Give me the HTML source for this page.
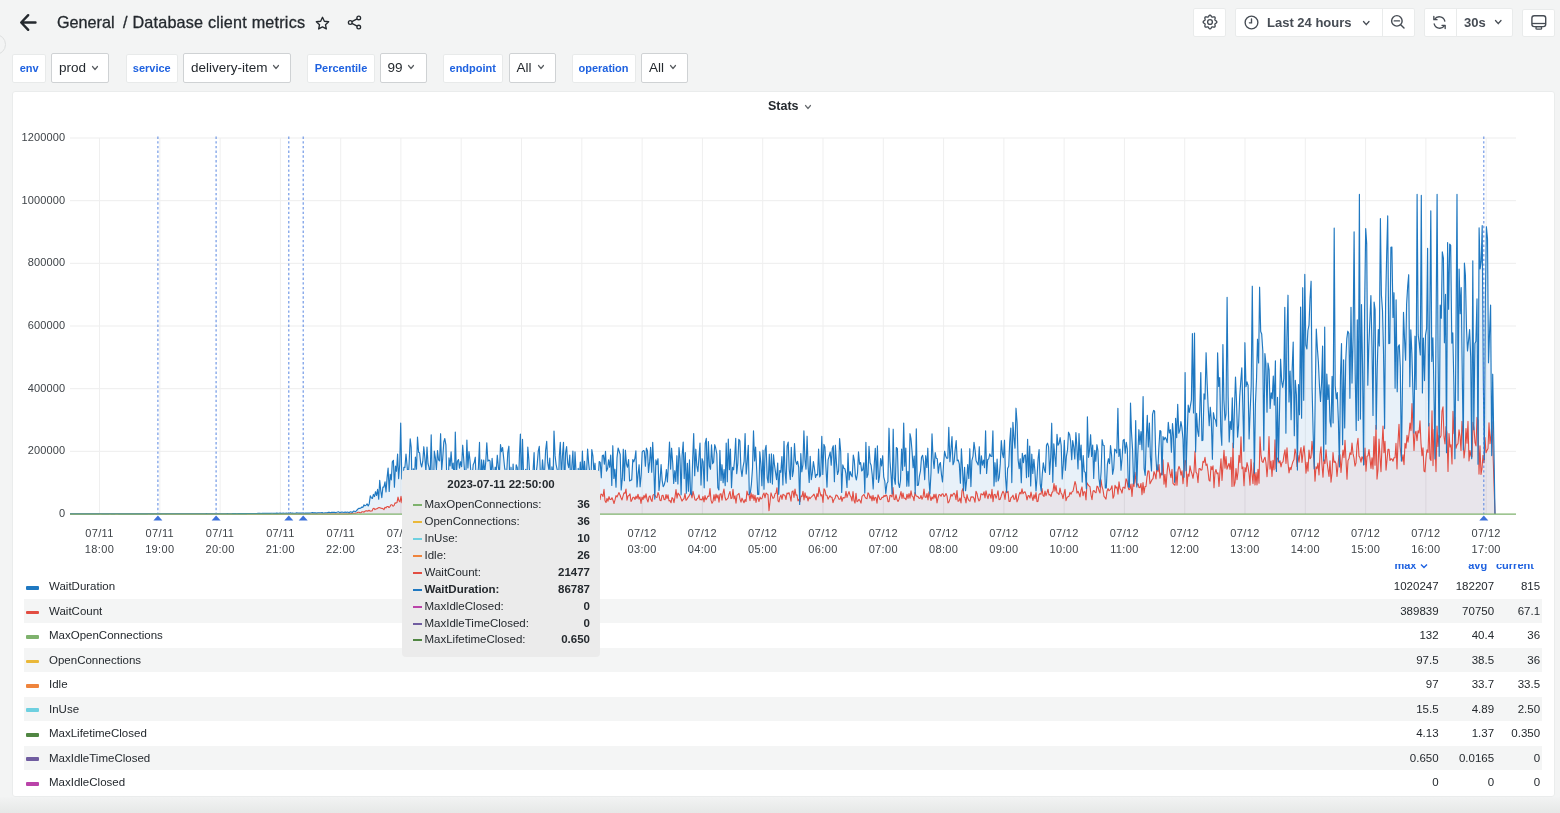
<!DOCTYPE html>
<html><head><meta charset="utf-8">
<style>
*{box-sizing:border-box;margin:0;padding:0}
html,body{width:1560px;height:813px;overflow:hidden}
body{background:#f3f4f4;font-family:"Liberation Sans",sans-serif;color:#24292e;position:relative}
.abs{position:absolute}
.btn{position:absolute;background:#fff;border:1px solid #e9ebeb;border-radius:2px}
.lbl{position:absolute;background:#fff;border:1px solid #e8eaea;border-radius:2px;color:#1f62e0;font-size:11px;font-weight:bold;height:29px;line-height:27px;text-align:center}
.val{position:absolute;background:#fff;border:1px solid #cfd2d4;border-radius:2px;color:#24292e;font-size:13.5px;height:29.5px;line-height:28px;padding-left:7px}
.chev{position:absolute;width:5px;height:5px;border-right:1.2px solid #555;border-bottom:1.2px solid #555;transform:rotate(45deg)}
.panel{position:absolute;left:12px;top:91px;width:1543px;height:706px;background:#fff;border:1px solid #eaecec;border-radius:3px}
.ylab{position:absolute;right:0;font-size:11px;color:#464c54;text-align:right;width:60px}
.xlab{position:absolute;font-size:11px;letter-spacing:0.35px;color:#3e4348;text-align:center;width:50px;line-height:16px}
.lrow{position:absolute;left:24px;width:1518px;height:24.65px;font-size:11.5px;color:#24292e}
.lrow.s{background:#f4f5f5}
.lrow .sw{position:absolute;left:2.2px;top:11.8px;width:13px;height:3.8px;border-radius:1px}
.lrow .nm{position:absolute;left:25px;top:6px}
.lrow .c1,.lrow .c2,.lrow .c3{position:absolute;top:6px;text-align:right;width:80px}
.lrow .c1{left:1334.6px}.lrow .c2{left:1390.1px}.lrow .c3{left:1436.1px}
.tt{position:absolute;left:402px;top:470px;width:198px;height:187px;background:#ebebeb;border-radius:4px}
.tr{position:absolute;left:0;width:198px;height:17px;font-size:11.5px;color:#24292e}
.tr .d{position:absolute;left:10.5px;top:6.3px;width:9px;height:2px}
.tr .n{position:absolute;left:22.5px;top:0.3px}
.tr .v{position:absolute;right:10px;top:0.3px;font-weight:bold}
#wrap{position:absolute;left:0;top:0;width:1560px;height:813px;will-change:transform}
</style></head><body><div id="wrap">
<!-- header -->
<svg class="abs" style="left:18px;top:12px" width="20" height="20" viewBox="0 0 20 20"><path d="M17.5 10.5H3.5M10.2 3.2L3.2 10.5L10.2 17.8" fill="none" stroke="#24292e" stroke-width="2.4" stroke-linecap="round" stroke-linejoin="round"/></svg>
<div class="abs" style="left:57px;top:13px;font-size:16.2px;color:#24292e;white-space:nowrap;-webkit-text-stroke:0.3px #24292e">General</div><div class="abs" style="left:123px;top:13px;font-size:16.2px;letter-spacing:0.2px;color:#24292e;white-space:nowrap;-webkit-text-stroke:0.3px #24292e">/ Database client metrics</div>
<svg class="abs" style="left:314px;top:14.7px" width="17" height="17" viewBox="0 0 24 24"><path d="M12 3.2l2.6 5.6 6.1.7-4.5 4.2 1.2 6-5.4-3-5.4 3 1.2-6-4.5-4.2 6.1-.7z" fill="none" stroke="#24292e" stroke-width="1.9" stroke-linejoin="round"/></svg>
<svg class="abs" style="left:345.7px;top:14.3px" width="17" height="17" viewBox="0 0 24 24"><circle cx="18" cy="5.5" r="2.6" fill="none" stroke="#24292e" stroke-width="1.9"/><circle cx="6" cy="12" r="2.6" fill="none" stroke="#24292e" stroke-width="1.9"/><circle cx="18" cy="18.5" r="2.6" fill="none" stroke="#24292e" stroke-width="1.9"/><path d="M8.3 10.8l7.4-4M8.3 13.2l7.4 4" stroke="#24292e" stroke-width="1.9"/></svg>
<div class="abs" style="left:-14.6px;top:33.8px;width:21px;height:21px;border:1px solid #dcdede;border-radius:50%"></div>
<!-- toolbar -->
<div class="btn" style="left:1193px;top:8px;width:33px;height:29px"></div>
<svg class="abs" style="left:1199.85px;top:12.3px" width="20" height="20" viewBox="0 0 20 20"><path d="M16.85 10.00L16.81 10.27L16.69 10.53L16.50 10.77L16.25 10.99L15.98 11.19L15.71 11.37L15.45 11.54L15.22 11.70L15.05 11.86L14.94 12.05L14.89 12.26L14.89 12.49L14.94 12.77L15.00 13.07L15.07 13.39L15.12 13.72L15.14 14.05L15.10 14.36L15.00 14.62L14.84 14.84L14.62 15.00L14.36 15.10L14.05 15.14L13.72 15.12L13.39 15.07L13.07 15.00L12.77 14.94L12.49 14.89L12.26 14.89L12.05 14.94L11.86 15.05L11.70 15.22L11.54 15.45L11.37 15.71L11.19 15.98L10.99 16.25L10.77 16.50L10.53 16.69L10.27 16.81L10.00 16.85L9.73 16.81L9.47 16.69L9.23 16.50L9.01 16.25L8.81 15.98L8.63 15.71L8.46 15.45L8.30 15.22L8.14 15.05L7.95 14.94L7.74 14.89L7.51 14.89L7.23 14.94L6.93 15.00L6.61 15.07L6.28 15.12L5.95 15.14L5.64 15.10L5.38 15.00L5.16 14.84L5.00 14.62L4.90 14.36L4.86 14.05L4.88 13.72L4.93 13.39L5.00 13.07L5.06 12.77L5.11 12.49L5.11 12.26L5.06 12.05L4.95 11.86L4.78 11.70L4.55 11.54L4.29 11.37L4.02 11.19L3.75 10.99L3.50 10.77L3.31 10.53L3.19 10.27L3.15 10.00L3.19 9.73L3.31 9.47L3.50 9.23L3.75 9.01L4.02 8.81L4.29 8.63L4.55 8.46L4.78 8.30L4.95 8.14L5.06 7.95L5.11 7.74L5.11 7.51L5.06 7.23L5.00 6.93L4.93 6.61L4.88 6.28L4.86 5.95L4.90 5.64L5.00 5.38L5.16 5.16L5.38 5.00L5.64 4.90L5.95 4.86L6.28 4.88L6.61 4.93L6.93 5.00L7.23 5.06L7.51 5.11L7.74 5.11L7.95 5.06L8.14 4.95L8.30 4.78L8.46 4.55L8.63 4.29L8.81 4.02L9.01 3.75L9.23 3.50L9.47 3.31L9.73 3.19L10.00 3.15L10.27 3.19L10.53 3.31L10.77 3.50L10.99 3.75L11.19 4.02L11.37 4.29L11.54 4.55L11.70 4.78L11.86 4.95L12.05 5.06L12.26 5.11L12.49 5.11L12.77 5.06L13.07 5.00L13.39 4.93L13.72 4.88L14.05 4.86L14.36 4.90L14.62 5.00L14.84 5.16L15.00 5.38L15.10 5.64L15.14 5.95L15.12 6.28L15.07 6.61L15.00 6.93L14.94 7.23L14.89 7.51L14.89 7.74L14.94 7.95L15.05 8.14L15.22 8.30L15.45 8.46L15.71 8.63L15.98 8.81L16.25 9.01L16.50 9.23L16.69 9.47L16.81 9.73L16.85 10.00Z" fill="none" stroke="#464c54" stroke-width="1.35" stroke-linejoin="round"/><circle cx="10" cy="10" r="2.4" fill="none" stroke="#464c54" stroke-width="1.35"/></svg>
<div class="btn" style="left:1235px;top:8px;width:180px;height:29px"></div>
<div class="abs" style="left:1382px;top:9px;width:1px;height:27px;background:#e9ebeb"></div>
<svg class="abs" style="left:1242.8px;top:14.2px" width="17" height="17" viewBox="0 0 24 24"><circle cx="12" cy="12" r="9" fill="none" stroke="#464c54" stroke-width="1.9"/><path d="M12 7v5.5H9" fill="none" stroke="#464c54" stroke-width="1.9" stroke-linecap="round"/></svg>
<div class="abs" style="left:1267px;top:15px;font-size:13px;font-weight:bold;color:#464c54;white-space:nowrap">Last 24 hours</div>

<svg class="abs" style="left:1389px;top:13px" width="18" height="18" viewBox="0 0 24 24"><circle cx="10.5" cy="10.5" r="7" fill="none" stroke="#464c54" stroke-width="1.9"/><path d="M7 10.5h7M15.6 15.6L20 20" fill="none" stroke="#464c54" stroke-width="1.9" stroke-linecap="round"/></svg>
<div class="btn" style="left:1424px;top:8px;width:89px;height:29px"></div>
<div class="abs" style="left:1456px;top:9px;width:1px;height:27px;background:#e9ebeb"></div>
<svg class="abs" style="left:1431px;top:14px" width="17" height="17" viewBox="0 0 24 24"><path d="M19.5 10A8 8 0 0 0 5 7.5M4.5 14A8 8 0 0 0 19 16.5" fill="none" stroke="#464c54" stroke-width="1.9" stroke-linecap="round"/><path d="M4 3.5v4.5h4.5M20 20.5V16h-4.5" fill="none" stroke="#464c54" stroke-width="1.9" stroke-linecap="round" stroke-linejoin="round"/></svg>
<div class="abs" style="left:1464px;top:15px;font-size:13px;font-weight:bold;color:#464c54">30s</div>

<div class="btn" style="left:1522px;top:8.5px;width:32.5px;height:28.5px"></div>
<svg class="abs" style="left:1525px;top:8px" width="30" height="30" viewBox="0 0 30 30"><rect x="6.9" y="7.8" width="13.8" height="10.8" rx="2.3" fill="none" stroke="#464c54" stroke-width="1.4"/><path d="M7 15.5H20.6" stroke="#464c54" stroke-width="1.3"/><rect x="10.9" y="18.6" width="5.8" height="2.6" rx="1.3" fill="none" stroke="#464c54" stroke-width="1.3"/></svg>
<!-- variables -->
<div class="lbl" style="left:12.4px;top:53.5px;width:33.6px">env</div>
<div class="val" style="left:51px;top:53px;width:58.4px">prod</div>
<div class="lbl" style="left:125.5px;top:53.5px;width:52.5px">service</div>
<div class="val" style="left:183px;top:53px;width:108px">delivery-item</div>
<div class="lbl" style="left:307px;top:53.5px;width:68px">Percentile</div>
<div class="val" style="left:379.5px;top:53px;width:47px">99</div>
<div class="lbl" style="left:442.5px;top:53.5px;width:60.5px">endpoint</div>
<div class="val" style="left:508.5px;top:53px;width:47px">All</div>
<div class="lbl" style="left:571.5px;top:53.5px;width:64px">operation</div>
<div class="val" style="left:641px;top:53px;width:46.5px">All</div>
<div class="abs" style="left:0;top:797px;width:1560px;height:16px;background:linear-gradient(#f2f3f3,#e6e8e7)"></div>
<!-- panel -->
<div class="panel"></div>
<div class="abs" style="left:768px;top:99px;font-size:12.5px;font-weight:bold;color:#24292e">Stats</div>

<div class="abs" style="left:0;width:65.3px;text-align:right;top:131.0px;font-size:11px;letter-spacing:0.15px;color:#3e4348">1200000</div>
<div class="abs" style="left:0;width:65.3px;text-align:right;top:193.7px;font-size:11px;letter-spacing:0.15px;color:#3e4348">1000000</div>
<div class="abs" style="left:0;width:65.3px;text-align:right;top:256.3px;font-size:11px;letter-spacing:0.15px;color:#3e4348">800000</div>
<div class="abs" style="left:0;width:65.3px;text-align:right;top:319.0px;font-size:11px;letter-spacing:0.15px;color:#3e4348">600000</div>
<div class="abs" style="left:0;width:65.3px;text-align:right;top:381.7px;font-size:11px;letter-spacing:0.15px;color:#3e4348">400000</div>
<div class="abs" style="left:0;width:65.3px;text-align:right;top:444.3px;font-size:11px;letter-spacing:0.15px;color:#3e4348">200000</div>
<div class="abs" style="left:0;width:65.3px;text-align:right;top:507.0px;font-size:11px;letter-spacing:0.15px;color:#3e4348">0</div>

<div class="xlab" style="left:74.5px;top:525px">07/11<br>18:00</div>
<div class="xlab" style="left:134.8px;top:525px">07/11<br>19:00</div>
<div class="xlab" style="left:195.1px;top:525px">07/11<br>20:00</div>
<div class="xlab" style="left:255.4px;top:525px">07/11<br>21:00</div>
<div class="xlab" style="left:315.7px;top:525px">07/11<br>22:00</div>
<div class="xlab" style="left:375.9px;top:525px">07/11<br>23:00</div>
<div class="xlab" style="left:436.2px;top:525px">07/12<br>00:00</div>
<div class="xlab" style="left:496.5px;top:525px">07/12<br>01:00</div>
<div class="xlab" style="left:556.8px;top:525px">07/12<br>02:00</div>
<div class="xlab" style="left:617.1px;top:525px">07/12<br>03:00</div>
<div class="xlab" style="left:677.4px;top:525px">07/12<br>04:00</div>
<div class="xlab" style="left:737.7px;top:525px">07/12<br>05:00</div>
<div class="xlab" style="left:798.0px;top:525px">07/12<br>06:00</div>
<div class="xlab" style="left:858.3px;top:525px">07/12<br>07:00</div>
<div class="xlab" style="left:918.6px;top:525px">07/12<br>08:00</div>
<div class="xlab" style="left:978.9px;top:525px">07/12<br>09:00</div>
<div class="xlab" style="left:1039.1px;top:525px">07/12<br>10:00</div>
<div class="xlab" style="left:1099.4px;top:525px">07/12<br>11:00</div>
<div class="xlab" style="left:1159.7px;top:525px">07/12<br>12:00</div>
<div class="xlab" style="left:1220.0px;top:525px">07/12<br>13:00</div>
<div class="xlab" style="left:1280.3px;top:525px">07/12<br>14:00</div>
<div class="xlab" style="left:1340.6px;top:525px">07/12<br>15:00</div>
<div class="xlab" style="left:1400.9px;top:525px">07/12<br>16:00</div>
<div class="xlab" style="left:1461.2px;top:525px">07/12<br>17:00</div>

<svg class="abs" style="left:0;top:0" width="1560" height="813" viewBox="0 0 1560 813">
<path d="M70 138.0H1516" stroke="#ededed" stroke-width="1"/><path d="M70 200.7H1516" stroke="#ededed" stroke-width="1"/><path d="M70 263.3H1516" stroke="#ededed" stroke-width="1"/><path d="M70 326.0H1516" stroke="#ededed" stroke-width="1"/><path d="M70 388.7H1516" stroke="#ededed" stroke-width="1"/><path d="M70 451.3H1516" stroke="#ededed" stroke-width="1"/><path d="M99.5 138V514" stroke="#efefef" stroke-width="1"/><path d="M159.8 138V514" stroke="#efefef" stroke-width="1"/><path d="M220.1 138V514" stroke="#efefef" stroke-width="1"/><path d="M280.4 138V514" stroke="#efefef" stroke-width="1"/><path d="M340.7 138V514" stroke="#efefef" stroke-width="1"/><path d="M400.9 138V514" stroke="#efefef" stroke-width="1"/><path d="M461.2 138V514" stroke="#efefef" stroke-width="1"/><path d="M521.5 138V514" stroke="#efefef" stroke-width="1"/><path d="M581.8 138V514" stroke="#efefef" stroke-width="1"/><path d="M642.1 138V514" stroke="#efefef" stroke-width="1"/><path d="M702.4 138V514" stroke="#efefef" stroke-width="1"/><path d="M762.7 138V514" stroke="#efefef" stroke-width="1"/><path d="M823.0 138V514" stroke="#efefef" stroke-width="1"/><path d="M883.3 138V514" stroke="#efefef" stroke-width="1"/><path d="M943.6 138V514" stroke="#efefef" stroke-width="1"/><path d="M1003.9 138V514" stroke="#efefef" stroke-width="1"/><path d="M1064.1 138V514" stroke="#efefef" stroke-width="1"/><path d="M1124.4 138V514" stroke="#efefef" stroke-width="1"/><path d="M1184.7 138V514" stroke="#efefef" stroke-width="1"/><path d="M1245.0 138V514" stroke="#efefef" stroke-width="1"/><path d="M1305.3 138V514" stroke="#efefef" stroke-width="1"/><path d="M1365.6 138V514" stroke="#efefef" stroke-width="1"/><path d="M1425.9 138V514" stroke="#efefef" stroke-width="1"/><path d="M1486.2 138V514" stroke="#efefef" stroke-width="1"/>
<path d="M70.0 513.8L71.0 513.8L72.1 513.8L73.1 513.8L74.2 513.8L75.2 513.8L76.3 513.8L77.3 513.8L78.4 513.8L79.4 513.8L80.5 513.8L81.5 513.8L82.6 513.8L83.6 513.8L84.7 513.8L85.7 513.8L86.8 513.8L87.8 513.8L88.9 513.8L89.9 513.8L91.0 513.8L92.0 513.8L93.1 513.8L94.1 513.8L95.2 513.8L96.2 513.8L97.3 513.8L98.3 513.8L99.4 513.8L100.4 513.7L101.5 513.8L102.5 513.8L103.6 513.8L104.6 513.8L105.7 513.8L106.7 513.8L107.8 513.8L108.8 513.8L109.9 513.7L110.9 513.8L112.0 513.8L113.0 513.8L114.1 513.8L115.1 513.8L116.2 513.7L117.2 513.7L118.3 513.8L119.3 513.8L120.4 513.8L121.4 513.8L122.5 513.8L123.5 513.8L124.6 513.8L125.6 513.8L126.7 513.8L127.7 513.8L128.8 513.8L129.8 513.8L130.9 513.8L131.9 513.8L133.0 513.8L134.0 513.8L135.1 513.8L136.1 513.8L137.2 513.8L138.2 513.8L139.3 513.8L140.3 513.8L141.4 513.8L142.4 513.8L143.5 513.8L144.5 513.8L145.6 513.8L146.6 513.8L147.7 513.8L148.7 513.7L149.8 513.8L150.8 513.8L151.9 513.8L152.9 513.8L154.0 513.8L155.0 513.7L156.1 513.8L157.1 513.8L158.2 513.7L159.2 513.8L160.3 513.8L161.3 513.8L162.4 513.7L163.4 513.7L164.5 513.7L165.5 513.8L166.6 513.8L167.6 513.7L168.7 513.7L169.7 513.7L170.8 513.8L171.8 513.7L172.9 513.7L173.9 513.7L175.0 513.8L176.0 513.7L177.1 513.7L178.1 513.7L179.2 513.7L180.2 513.8L181.3 513.7L182.3 513.7L183.4 513.7L184.4 513.8L185.5 513.7L186.5 513.7L187.6 513.7L188.6 513.7L189.7 513.7L190.7 513.8L191.8 513.7L192.8 513.7L193.9 513.7L194.9 513.7L196.0 513.7L197.0 513.7L198.1 513.7L199.1 513.7L200.2 513.7L201.2 513.7L202.3 513.7L203.3 513.7L204.4 513.7L205.4 513.7L206.5 513.6L207.5 513.7L208.6 513.7L209.6 513.7L210.7 513.7L211.7 513.7L212.8 513.7L213.8 513.7L214.9 513.7L215.9 513.7L217.0 513.7L218.0 513.7L219.1 513.7L220.1 513.7L221.2 513.7L222.2 513.7L223.3 513.7L224.3 513.7L225.4 513.7L226.4 513.7L227.5 513.6L228.5 513.7L229.6 513.7L230.6 513.7L231.7 513.7L232.7 513.6L233.8 513.6L234.8 513.6L235.9 513.6L236.9 513.7L238.0 513.6L239.0 513.6L240.1 513.6L241.1 513.6L242.2 513.6L243.2 513.6L244.3 513.6L245.3 513.6L246.4 513.6L247.4 513.5L248.5 513.5L249.5 513.5L250.6 513.5L251.6 513.5L252.7 513.5L253.7 513.5L254.8 513.5L255.8 513.5L256.9 513.5L257.9 513.4L259.0 513.4L260.0 513.4L261.1 513.5L262.1 513.3L263.2 513.4L264.2 513.4L265.3 513.4L266.3 513.4L267.4 513.3L268.4 513.4L269.5 513.4L270.5 513.4L271.6 513.2L272.6 513.3L273.7 513.4L274.7 513.3L275.8 513.4L276.8 513.1L277.9 513.4L278.9 513.2L280.0 513.0L281.0 513.4L282.1 513.2L283.1 513.1L284.2 513.2L285.2 513.2L286.3 513.1L287.3 513.2L288.4 513.1L289.4 513.2L290.5 512.8L291.5 513.2L292.6 513.0L293.6 513.2L294.7 513.2L295.7 513.1L296.8 512.9L297.8 513.0L298.9 513.1L299.9 513.0L301.0 513.1L302.0 513.0L303.1 513.0L304.1 513.2L305.2 513.0L306.2 513.1L307.3 513.0L308.3 513.1L309.4 513.1L310.4 513.0L311.5 512.8L312.5 512.6L313.6 512.9L314.6 512.7L315.7 512.9L316.7 513.1L317.8 512.8L318.8 512.7L319.9 512.8L320.9 512.7L322.0 512.6L323.0 512.9L324.1 513.0L325.1 512.7L326.2 512.7L327.2 512.7L328.3 512.4L329.3 512.3L330.4 512.7L331.4 512.4L332.5 512.4L333.5 512.4L334.6 512.3L335.6 512.6L336.7 512.3L337.7 512.0L338.8 511.9L339.8 512.6L340.9 512.3L341.9 512.1L343.0 512.3L344.0 512.5L345.1 511.9L346.1 512.6L347.2 512.1L348.2 512.2L349.3 512.6L350.3 511.8L351.4 512.0L352.4 512.4L353.5 511.1L354.5 511.2L355.6 511.7L356.6 510.5L357.7 509.3L358.7 508.4L359.8 508.4L360.8 508.0L361.9 507.0L362.9 507.4L364.0 504.8L365.0 505.9L366.1 505.1L367.1 503.9L368.2 505.9L369.2 503.9L370.3 495.8L371.3 497.8L372.4 498.5L373.4 494.4L374.5 496.6L375.5 491.7L376.6 495.5L377.6 489.3L378.7 499.2L379.7 480.3L380.8 491.0L381.8 497.6L382.9 487.0L383.9 487.2L385.0 481.9L386.0 492.0L387.1 477.4L388.1 468.0L389.2 491.5L390.2 474.2L391.3 479.9L392.3 461.9L393.4 460.3L394.4 487.2L395.5 466.1L396.5 471.3L397.6 454.1L398.6 478.6L399.7 464.7L400.7 423.1L401.8 478.5L402.8 480.5L403.9 467.4L404.9 467.5L406.0 454.1L407.0 464.8L408.1 478.2L409.1 463.5L410.2 438.8L411.2 447.4L412.3 495.4L413.3 468.7L414.4 479.8L415.4 457.1L416.5 469.1L417.5 437.1L418.6 452.3L419.6 452.8L420.7 463.5L421.7 467.0L422.8 461.2L423.8 446.7L424.9 458.3L425.9 471.7L427.0 447.0L428.0 463.5L429.1 467.6L430.1 478.4L431.2 434.8L432.2 476.1L433.3 495.3L434.3 451.0L435.4 457.8L436.4 469.7L437.5 450.5L438.5 459.8L439.6 460.8L440.6 433.7L441.7 470.0L442.7 458.4L443.8 442.0L444.8 438.5L445.9 444.8L446.9 484.0L448.0 495.2L449.0 457.8L450.1 466.0L451.1 451.9L452.2 468.4L453.2 463.1L454.3 489.2L455.3 432.0L456.4 473.2L457.4 461.2L458.5 459.5L459.5 468.2L460.6 461.7L461.6 466.7L462.7 445.2L463.7 458.9L464.8 474.7L465.8 475.4L466.9 440.1L467.9 468.0L469.0 451.5L470.0 460.5L471.1 475.0L472.1 477.8L473.2 464.7L474.2 462.6L475.3 457.2L476.3 485.6L477.4 475.5L478.4 467.9L479.5 442.4L480.5 495.2L481.6 459.9L482.6 474.7L483.7 460.0L484.7 473.9L485.8 461.0L486.8 442.9L487.9 461.2L488.9 460.0L490.0 460.9L491.0 477.8L492.1 458.4L493.1 469.7L494.2 478.8L495.2 467.1L496.3 470.0L497.3 455.2L498.4 467.2L499.4 474.5L500.5 444.6L501.5 451.7L502.6 447.5L503.6 457.4L504.7 468.2L505.7 472.9L506.8 470.8L507.8 452.3L508.9 446.2L509.9 488.9L511.0 467.2L512.0 487.9L513.1 464.1L514.1 484.7L515.2 485.6L516.2 464.8L517.3 467.8L518.3 491.5L519.4 455.4L520.4 434.1L521.5 488.8L522.5 439.3L523.6 476.9L524.6 474.0L525.7 469.3L526.7 488.3L527.8 447.1L528.8 459.2L529.9 477.9L530.9 470.8L532.0 489.3L533.0 471.8L534.1 452.6L535.1 492.3L536.2 473.2L537.2 464.4L538.3 450.9L539.3 446.4L540.4 473.5L541.4 477.7L542.5 459.9L543.5 472.1L544.6 471.3L545.6 450.5L546.7 441.4L547.7 462.7L548.8 469.5L549.8 458.1L550.9 494.9L551.9 466.9L553.0 482.5L554.0 431.0L555.1 455.9L556.1 464.6L557.2 469.6L558.2 495.0L559.3 456.0L560.3 442.4L561.4 477.6L562.4 456.5L563.5 442.3L564.5 489.8L565.6 452.7L566.6 446.5L567.7 463.3L568.7 467.6L569.8 455.0L570.8 489.7L571.9 465.3L572.9 451.0L574.0 485.2L575.0 451.9L576.1 473.0L577.1 495.0L578.2 468.3L579.2 481.2L580.3 462.0L581.3 484.2L582.4 451.1L583.4 477.7L584.5 461.4L585.5 475.6L586.6 471.5L587.6 449.0L588.7 463.6L589.7 472.6L590.8 485.4L591.8 449.5L592.9 455.9L593.9 471.6L595.0 463.2L596.0 482.1L597.1 481.8L598.1 479.0L599.2 461.5L600.2 462.4L601.3 477.8L602.3 455.8L603.4 455.1L604.4 464.2L605.5 451.4L606.5 471.1L607.6 468.5L608.6 459.8L609.7 467.3L610.7 455.0L611.8 485.4L612.8 445.7L613.9 478.4L614.9 469.2L616.0 487.2L617.0 457.9L618.1 448.0L619.1 451.0L620.2 454.5L621.2 489.9L622.3 478.4L623.3 449.2L624.4 480.7L625.4 450.2L626.5 464.1L627.5 467.2L628.6 459.6L629.6 480.9L630.7 480.3L631.7 479.9L632.8 459.5L633.8 461.8L634.9 458.3L635.9 450.9L637.0 486.9L638.0 475.1L639.1 464.7L640.1 486.8L641.2 474.7L642.2 451.9L643.3 450.6L644.3 451.0L645.4 466.2L646.4 448.1L647.5 451.0L648.5 472.4L649.6 461.9L650.6 447.4L651.7 472.3L652.7 442.4L653.8 467.0L654.8 499.1L655.9 459.8L656.9 464.6L658.0 458.7L659.0 490.5L660.1 479.6L661.1 464.5L662.2 480.6L663.2 486.7L664.3 484.7L665.3 480.4L666.4 469.5L667.4 482.0L668.5 463.5L669.5 442.0L670.6 469.1L671.6 448.2L672.7 462.7L673.7 483.4L674.8 470.7L675.8 481.4L676.9 455.7L677.9 483.9L679.0 447.5L680.0 458.5L681.1 494.8L682.1 455.5L683.2 442.1L684.2 478.6L685.3 452.5L686.3 493.3L687.4 463.3L688.4 491.3L689.5 459.9L690.5 493.2L691.6 494.8L692.6 461.2L693.7 433.5L694.7 475.7L695.8 449.2L696.8 465.4L697.9 471.7L698.9 458.0L700.0 443.0L701.0 485.1L702.1 458.7L703.1 461.9L704.2 487.8L705.2 443.3L706.3 438.4L707.3 480.9L708.4 441.5L709.4 466.1L710.5 469.3L711.5 444.9L712.6 463.6L713.6 462.2L714.7 444.7L715.7 448.0L716.8 453.8L717.8 487.4L718.9 489.9L719.9 450.4L721.0 480.4L722.0 464.7L723.1 482.6L724.1 469.5L725.2 485.6L726.2 443.0L727.3 481.8L728.3 439.0L729.4 469.6L730.4 449.1L731.5 487.6L732.5 467.3L733.6 469.9L734.6 459.0L735.7 438.3L736.7 473.6L737.8 463.3L738.8 439.4L739.9 440.8L740.9 468.3L742.0 476.4L743.0 467.1L744.1 461.4L745.1 433.5L746.2 473.9L747.2 462.2L748.3 445.3L749.3 494.6L750.4 492.3L751.4 484.1L752.5 468.4L753.5 430.9L754.6 460.9L755.6 447.1L756.7 469.9L757.7 494.5L758.8 494.5L759.8 451.7L760.9 463.9L761.9 485.7L763.0 450.2L764.0 489.2L765.1 450.0L766.1 445.3L767.2 477.8L768.2 482.8L769.3 454.2L770.3 482.6L771.4 453.9L772.4 484.1L773.5 454.7L774.5 465.2L775.6 472.9L776.6 479.7L777.7 463.0L778.7 494.3L779.8 470.6L780.8 472.3L781.9 456.5L782.9 484.9L784.0 441.3L785.0 471.1L786.1 483.2L787.1 446.1L788.2 442.1L789.2 469.2L790.3 479.5L791.3 447.3L792.4 476.6L793.4 471.0L794.5 443.5L795.5 460.7L796.6 464.3L797.6 461.3L798.7 467.3L799.7 504.5L800.8 453.5L801.8 471.8L802.9 464.8L803.9 430.9L805.0 460.2L806.0 469.1L807.1 436.2L808.1 466.2L809.2 482.5L810.2 456.4L811.3 479.6L812.3 473.6L813.4 461.5L814.4 468.2L815.5 477.5L816.5 474.4L817.6 475.0L818.6 449.1L819.7 476.9L820.7 474.7L821.8 436.3L822.8 474.4L823.9 444.4L824.9 446.9L826.0 468.5L827.0 487.1L828.1 459.6L829.1 456.3L830.2 452.0L831.2 465.2L832.3 448.5L833.3 445.8L834.4 481.7L835.4 445.2L836.5 463.6L837.5 474.5L838.6 470.9L839.6 438.5L840.7 451.7L841.7 492.5L842.8 464.9L843.8 468.2L844.9 468.7L845.9 473.7L847.0 487.5L848.0 453.4L849.1 479.9L850.1 471.5L851.2 475.0L852.2 476.8L853.3 455.1L854.3 460.4L855.4 476.0L856.4 480.0L857.5 473.0L858.5 451.8L859.6 464.2L860.6 462.6L861.7 470.9L862.7 469.8L863.8 462.8L864.8 493.1L865.9 442.3L866.9 477.6L868.0 474.4L869.0 446.3L870.1 462.7L871.1 465.3L872.2 474.6L873.2 488.9L874.3 463.2L875.3 448.3L876.4 479.2L877.4 445.9L878.5 482.5L879.5 476.7L880.6 458.5L881.6 465.9L882.7 455.7L883.7 476.8L884.8 481.1L885.8 493.4L886.9 483.6L887.9 481.7L889.0 428.2L890.0 461.3L891.1 475.6L892.1 493.8L893.2 429.2L894.2 478.1L895.3 484.3L896.3 447.5L897.4 448.6L898.4 482.8L899.5 487.5L900.5 480.5L901.6 449.1L902.6 470.4L903.7 423.1L904.7 466.2L905.8 448.0L906.8 486.2L907.9 471.4L908.9 486.1L910.0 433.7L911.0 438.9L912.1 451.7L913.1 467.7L914.2 456.0L915.2 493.7L916.3 428.8L917.3 485.4L918.4 485.2L919.4 476.1L920.5 470.8L921.5 457.2L922.6 455.3L923.6 461.8L924.7 479.6L925.7 455.7L926.8 467.4L927.8 448.2L928.9 479.1L929.9 493.6L931.0 472.6L932.0 433.9L933.1 458.7L934.1 468.5L935.2 452.5L936.2 458.2L937.3 458.8L938.3 473.1L939.4 464.4L940.4 462.6L941.5 475.0L942.5 482.0L943.6 463.5L944.6 451.2L945.7 456.0L946.7 458.2L947.8 458.1L948.8 427.4L949.9 461.7L950.9 450.1L952.0 436.6L953.0 464.7L954.1 461.6L955.1 450.1L956.2 440.5L957.2 460.8L958.3 460.1L959.3 464.1L960.4 483.2L961.4 448.8L962.5 469.0L963.5 490.7L964.6 467.3L965.6 490.7L966.7 479.9L967.7 464.6L968.8 478.5L969.8 448.7L970.9 486.6L971.9 460.6L973.0 456.1L974.0 442.4L975.1 450.4L976.1 460.7L977.2 462.9L978.2 464.9L979.3 446.7L980.3 473.8L981.4 455.9L982.4 465.1L983.5 460.0L984.5 467.6L985.6 430.9L986.6 473.5L987.7 459.5L988.7 459.0L989.8 453.9L990.8 456.2L991.9 456.5L992.9 430.9L994.0 486.1L995.0 462.7L996.1 481.8L997.1 459.1L998.2 480.9L999.2 477.4L1000.3 463.4L1001.3 440.6L1002.4 453.3L1003.4 457.6L1004.5 440.2L1005.5 476.9L1006.6 492.0L1007.6 468.6L1008.7 466.2L1009.7 442.3L1010.8 428.0L1011.8 482.6L1012.9 422.4L1013.9 436.7L1015.0 448.1L1016.0 408.2L1017.1 422.7L1018.1 459.9L1019.2 468.6L1020.2 458.8L1021.3 482.8L1022.3 453.3L1023.4 462.6L1024.4 455.4L1025.5 454.9L1026.5 477.6L1027.6 439.3L1028.6 476.8L1029.7 446.0L1030.7 486.0L1031.8 454.2L1032.8 473.4L1033.9 459.4L1034.9 470.6L1036.0 491.0L1037.0 478.0L1038.1 458.6L1039.1 449.5L1040.2 483.6L1041.2 490.9L1042.3 473.7L1043.3 462.8L1044.4 469.7L1045.4 472.5L1046.5 445.2L1047.5 443.2L1048.6 446.8L1049.6 474.4L1050.7 457.6L1051.7 423.2L1052.8 482.3L1053.8 443.8L1054.9 456.9L1055.9 466.4L1057.0 434.4L1058.0 445.2L1059.1 443.5L1060.1 437.5L1061.2 445.5L1062.2 478.9L1063.3 464.0L1064.3 440.3L1065.4 470.3L1066.4 456.4L1067.5 450.2L1068.5 432.2L1069.6 434.4L1070.6 441.2L1071.7 459.7L1072.7 440.6L1073.8 447.1L1074.8 458.9L1075.9 432.5L1076.9 447.3L1078.0 469.0L1079.0 433.6L1080.1 460.0L1081.1 445.1L1082.2 482.1L1083.2 455.6L1084.3 471.8L1085.3 472.2L1086.4 488.7L1087.4 416.8L1088.5 457.3L1089.5 450.3L1090.6 434.7L1091.6 456.5L1092.7 445.0L1093.7 478.5L1094.8 450.4L1095.8 461.3L1096.9 444.7L1097.9 450.4L1099.0 478.6L1100.0 487.0L1101.1 471.7L1102.1 439.7L1103.2 445.3L1104.2 445.5L1105.3 487.9L1106.3 487.9L1107.4 464.2L1108.4 458.7L1109.5 463.6L1110.5 445.6L1111.6 455.4L1112.6 474.3L1113.7 468.5L1114.7 449.1L1115.8 450.3L1116.8 453.0L1117.9 408.3L1118.9 456.4L1120.0 449.0L1121.0 470.2L1122.1 457.8L1123.1 440.5L1124.2 439.4L1125.2 453.3L1126.3 442.3L1127.3 448.8L1128.4 487.0L1129.4 487.3L1130.5 403.0L1131.5 432.4L1132.6 450.0L1133.6 483.9L1134.7 474.4L1135.7 420.5L1136.8 487.0L1137.8 454.5L1138.9 429.7L1139.9 444.5L1141.0 431.5L1142.0 449.8L1143.1 396.5L1144.1 468.3L1145.2 475.3L1146.2 440.3L1147.3 415.4L1148.3 447.0L1149.4 423.0L1150.4 456.9L1151.5 470.9L1152.5 414.4L1153.6 410.4L1154.6 410.9L1155.7 454.0L1156.7 469.7L1157.8 469.9L1158.8 448.7L1159.9 430.5L1160.9 431.2L1162.0 474.9L1163.0 436.6L1164.1 439.9L1165.1 437.3L1166.2 439.2L1167.2 442.7L1168.3 422.4L1169.3 433.0L1170.4 429.7L1171.4 452.2L1172.5 423.5L1173.5 436.1L1174.6 482.3L1175.6 418.3L1176.7 437.6L1177.7 404.3L1178.8 433.2L1179.8 430.6L1180.9 421.5L1181.9 427.3L1183.0 439.2L1184.0 477.3L1185.1 372.5L1186.1 470.8L1187.2 434.6L1188.2 405.0L1189.3 412.5L1190.3 406.4L1191.4 399.8L1192.4 333.6L1193.5 412.9L1194.5 333.0L1195.6 451.9L1196.6 413.4L1197.7 431.1L1198.7 436.5L1199.8 410.0L1200.8 372.6L1201.9 440.6L1202.9 440.3L1204.0 393.9L1205.0 399.2L1206.1 352.7L1207.1 382.2L1208.2 407.8L1209.2 425.7L1210.3 407.2L1211.3 419.8L1212.4 459.3L1213.4 412.7L1214.5 418.5L1215.5 420.0L1216.6 426.3L1217.6 352.8L1218.7 386.5L1219.7 377.5L1220.8 431.0L1221.8 445.3L1222.9 344.5L1223.9 399.6L1225.0 420.2L1226.0 414.2L1227.1 297.3L1228.1 395.6L1229.2 442.0L1230.2 421.3L1231.3 429.4L1232.3 397.9L1233.4 447.7L1234.4 410.4L1235.5 377.1L1236.5 401.6L1237.6 437.1L1238.6 425.4L1239.7 396.5L1240.7 382.2L1241.8 367.8L1242.8 405.6L1243.9 451.2L1244.9 342.7L1246.0 386.7L1247.0 381.9L1248.1 385.4L1249.1 438.9L1250.2 409.6L1251.2 385.7L1252.3 286.2L1253.3 392.8L1254.4 473.2L1255.4 404.4L1256.5 379.2L1257.5 339.2L1258.6 363.0L1259.6 287.2L1260.7 331.5L1261.7 334.0L1262.8 350.7L1263.8 450.2L1264.9 353.5L1265.9 363.6L1267.0 412.2L1268.0 363.0L1269.1 369.8L1270.1 408.4L1271.2 392.8L1272.2 398.7L1273.3 376.1L1274.3 405.1L1275.4 360.8L1276.4 471.5L1277.5 397.4L1278.5 461.5L1279.6 405.9L1280.6 359.2L1281.7 381.7L1282.7 387.4L1283.8 378.5L1284.8 307.3L1285.9 433.2L1286.9 338.1L1288.0 295.2L1289.0 401.9L1290.1 371.1L1291.1 419.7L1292.2 368.1L1293.2 342.0L1294.3 435.7L1295.3 380.4L1296.4 394.8L1297.4 470.1L1298.5 384.6L1299.5 414.7L1300.6 307.0L1301.6 418.2L1302.7 287.7L1303.7 400.3L1304.8 274.4L1305.8 345.1L1306.9 349.0L1307.9 330.5L1309.0 325.1L1310.0 298.8L1311.1 281.2L1312.1 388.4L1313.2 435.1L1314.2 468.8L1315.3 389.6L1316.3 329.1L1317.4 348.8L1318.4 362.2L1319.5 386.5L1320.5 401.5L1321.6 382.3L1322.6 346.1L1323.7 460.9L1324.7 327.1L1325.8 444.2L1326.8 374.0L1327.9 399.4L1328.9 384.8L1330.0 421.3L1331.0 427.0L1332.1 376.4L1333.1 422.9L1334.2 228.1L1335.2 385.8L1336.3 398.8L1337.3 392.6L1338.4 421.3L1339.4 466.9L1340.5 375.5L1341.5 343.5L1342.6 444.8L1343.6 359.8L1344.7 428.0L1345.7 361.5L1346.8 338.7L1347.8 331.2L1348.9 333.6L1349.9 398.3L1351.0 307.3L1352.0 383.1L1353.1 336.9L1354.1 231.9L1355.2 373.9L1356.2 430.5L1357.3 319.9L1358.3 420.4L1359.4 194.4L1360.4 419.1L1361.5 304.5L1362.5 363.2L1363.6 465.0L1364.6 308.9L1365.7 228.6L1366.7 243.9L1367.8 385.2L1368.8 345.9L1369.9 319.4L1370.9 295.5L1372.0 347.0L1373.0 415.4L1374.1 302.0L1375.1 309.9L1376.2 429.2L1377.2 369.4L1378.3 329.6L1379.3 345.9L1380.4 218.5L1381.4 295.0L1382.5 310.3L1383.5 351.1L1384.6 428.6L1385.6 303.8L1386.7 253.3L1387.7 215.9L1388.8 343.6L1389.8 343.2L1390.9 247.3L1391.9 247.0L1393.0 317.4L1394.0 292.7L1395.1 388.2L1396.1 299.9L1397.2 391.8L1398.2 346.7L1399.3 344.8L1400.3 367.2L1401.4 461.0L1402.4 390.2L1403.5 312.4L1404.5 338.3L1405.6 360.2L1406.6 304.3L1407.7 286.1L1408.7 274.7L1409.8 386.7L1410.8 329.9L1411.9 353.7L1412.9 390.7L1414.0 433.0L1415.0 336.2L1416.1 389.4L1417.1 194.4L1418.2 334.9L1419.2 343.2L1420.3 355.0L1421.3 195.4L1422.4 392.9L1423.4 338.0L1424.5 380.6L1425.5 335.1L1426.6 328.7L1427.6 248.4L1428.7 426.0L1429.7 327.1L1430.8 210.9L1431.8 361.5L1432.9 337.8L1433.9 388.1L1435.0 458.9L1436.0 332.1L1437.1 194.4L1438.1 357.8L1439.2 456.3L1440.2 305.0L1441.3 318.2L1442.3 251.9L1443.4 258.1L1444.4 342.8L1445.5 294.4L1446.5 452.8L1447.6 242.5L1448.6 309.3L1449.7 244.0L1450.7 245.4L1451.8 343.1L1452.8 332.9L1453.9 385.5L1454.9 458.8L1456.0 331.2L1457.0 194.4L1458.1 400.6L1459.1 269.1L1460.2 313.7L1461.2 287.5L1462.3 377.1L1463.3 450.0L1464.4 263.1L1465.4 275.2L1466.5 328.1L1467.5 350.9L1468.6 340.1L1469.6 329.6L1470.7 357.0L1471.7 458.7L1472.8 260.8L1473.8 429.8L1474.9 343.4L1475.9 341.3L1477.0 298.9L1478.0 464.3L1479.1 227.8L1480.1 268.9L1481.2 261.4L1482.2 225.5L1483.3 379.2L1484.3 459.8L1485.4 297.4L1486.4 226.7L1487.5 238.8L1488.5 362.8L1489.6 331.4L1490.6 305.0L1491.7 455.6L1492.7 374.2L1495 514L70.0 514Z" fill="#1f78c1" fill-opacity="0.1"/>
<path d="M70.0 514.0L71.0 514.0L72.0 514.0L73.0 514.0L74.0 514.0L75.0 514.0L76.0 514.0L77.0 514.0L78.0 514.0L79.0 514.0L80.0 514.0L81.0 514.0L82.0 514.0L83.0 514.0L84.0 514.0L85.0 514.0L86.0 514.0L87.0 514.0L88.0 514.0L89.0 514.0L90.0 514.0L91.0 514.0L92.0 514.0L93.0 514.0L94.0 514.0L95.0 514.0L96.0 514.0L97.0 514.0L98.0 514.0L99.0 514.0L100.0 514.0L101.0 514.0L102.0 514.0L103.0 514.0L104.0 514.0L105.0 514.0L106.0 514.0L107.0 514.0L108.0 514.0L109.0 514.0L110.0 514.0L111.0 514.0L112.0 514.0L113.0 514.0L114.0 514.0L115.0 514.0L116.0 514.0L117.0 514.0L118.0 514.0L119.0 514.0L120.0 514.0L121.0 514.0L122.0 514.0L123.0 514.0L124.0 514.0L125.0 514.0L126.0 514.0L127.0 514.0L128.0 514.0L129.0 514.0L130.0 514.0L131.0 514.0L132.0 514.0L133.0 514.0L134.0 514.0L135.0 514.0L136.0 514.0L137.0 514.0L138.0 514.0L139.0 514.0L140.0 514.0L141.0 514.0L142.0 514.0L143.0 514.0L144.0 514.0L145.0 514.0L146.0 514.0L147.0 514.0L148.0 514.0L149.0 514.0L150.0 514.0L151.0 514.0L152.0 514.0L153.0 514.0L154.0 514.0L155.0 514.0L156.0 514.0L157.0 514.0L158.0 514.0L159.0 514.0L160.0 514.0L161.0 514.0L162.0 514.0L163.0 514.0L164.0 514.0L165.0 514.0L166.0 514.0L167.0 514.0L168.0 514.0L169.0 514.0L170.0 514.0L171.0 514.0L172.0 514.0L173.0 514.0L174.0 514.0L175.0 514.0L176.0 514.0L177.0 514.0L178.0 514.0L179.0 514.0L180.0 514.0L181.0 514.0L182.0 514.0L183.0 514.0L184.0 514.0L185.0 514.0L186.0 514.0L187.0 514.0L188.0 514.0L189.0 514.0L190.0 514.0L191.0 514.0L192.0 514.0L193.0 514.0L194.0 514.0L195.0 514.0L196.0 514.0L197.0 514.0L198.0 514.0L199.0 514.0L200.0 514.0L201.0 514.0L202.0 514.0L203.0 514.0L204.0 514.0L205.0 514.0L206.0 514.0L207.0 514.0L208.0 514.0L209.0 514.0L210.0 514.0L211.0 514.0L212.0 514.0L213.0 514.0L214.0 514.0L215.0 514.0L216.0 514.0L217.0 514.0L218.0 514.0L219.0 514.0L220.0 514.0L221.0 514.0L222.0 514.0L223.0 514.0L224.0 514.0L225.0 514.0L226.0 514.0L227.0 514.0L228.0 514.0L229.0 514.0L230.0 514.0L231.0 514.0L232.0 514.0L233.0 514.0L234.0 514.0L235.0 514.0L236.0 514.0L237.0 514.0L238.0 514.0L239.0 514.0L240.0 514.0L241.0 514.0L242.0 514.0L243.0 514.0L244.0 514.0L245.0 514.0L246.0 514.0L247.0 514.0L248.0 514.0L249.0 514.0L250.0 514.0L251.0 514.0L252.0 514.0L253.0 514.0L254.0 514.0L255.0 514.0L256.0 514.0L257.0 514.0L258.0 514.0L259.0 514.0L260.0 514.0L261.0 514.0L262.0 514.0L263.0 514.0L264.0 514.0L265.0 514.0L266.0 514.0L267.0 514.0L268.0 514.0L269.0 514.0L270.0 514.0L271.0 514.0L272.0 514.0L273.0 514.0L274.0 514.0L275.0 514.0L276.0 514.0L277.0 514.0L278.0 514.0L279.0 514.0L280.0 514.0L281.0 514.0L282.0 514.0L283.0 514.0L284.0 514.0L285.0 514.0L286.0 514.0L287.0 514.0L288.0 514.0L289.0 514.0L290.0 514.0L291.0 514.0L292.0 514.0L293.0 514.0L294.0 514.0L295.0 514.0L296.0 514.0L297.0 514.0L298.0 514.0L299.0 514.0L300.0 514.0L301.0 514.0L302.0 514.0L303.0 514.0L304.0 514.0L305.0 514.0L306.0 514.0L307.0 514.0L308.0 514.0L309.0 514.0L310.0 514.0L311.0 514.0L312.0 514.0L313.0 514.0L314.0 514.0L315.0 514.0L316.0 514.0L317.0 514.0L318.0 514.0L319.0 514.0L320.0 514.0L321.0 514.0L322.0 514.0L323.0 514.0L324.0 514.0L325.0 514.0L326.0 514.0L327.0 514.0L328.0 514.0L329.0 514.0L330.0 514.0L331.0 514.0L332.0 514.0L333.0 514.0L334.0 514.0L335.0 514.0L336.0 514.0L337.0 514.0L338.0 514.0L339.0 514.0L340.0 514.0L341.0 514.0L342.0 514.0L343.0 514.0L344.0 514.0L345.0 514.0L346.0 514.0L347.0 514.0L348.0 514.0L349.0 513.8L350.0 513.7L351.0 513.6L352.0 513.3L353.0 513.2L354.0 513.2L355.0 513.2L356.0 513.0L357.0 512.7L358.0 512.3L359.0 512.3L360.0 512.7L361.0 512.6L362.0 511.8L363.0 511.8L364.0 512.1L365.0 511.3L366.0 510.8L367.0 510.9L368.0 511.1L369.0 510.3L370.0 511.1L371.0 511.0L372.0 510.9L373.0 508.8L374.0 508.3L375.0 509.6L376.0 508.9L377.0 508.7L378.0 508.0L379.0 507.5L380.0 507.7L381.0 508.2L382.0 508.4L383.0 508.7L384.0 509.6L385.0 507.2L386.0 507.9L387.0 506.5L388.0 506.5L389.0 507.5L390.0 506.6L391.0 504.8L392.0 504.8L393.0 506.2L394.0 505.6L395.0 502.9L396.0 503.1L397.0 502.6L398.0 497.1L399.0 500.9L400.0 501.8L401.0 496.4L402.0 502.8L403.0 503.2L404.0 497.8L405.0 501.6L406.0 503.1L407.0 500.2L408.0 505.5L409.0 499.9L410.0 500.8L411.0 500.0L412.0 502.5L413.0 497.2L414.0 499.5L415.0 500.2L416.0 499.1L417.0 502.0L418.0 500.1L419.0 503.6L420.0 502.4L421.0 498.7L422.0 499.0L423.0 497.2L424.0 500.8L425.0 499.2L426.0 500.7L427.0 498.0L428.0 496.4L429.0 495.4L430.0 496.7L431.0 500.6L432.0 497.7L433.0 501.3L434.0 503.7L435.0 497.8L436.0 498.1L437.0 496.2L438.0 496.0L439.0 501.8L440.0 500.9L441.0 498.3L442.0 498.1L443.0 497.2L444.0 502.0L445.0 499.0L446.0 496.5L447.0 492.9L448.0 501.9L449.0 493.7L450.0 499.1L451.0 502.4L452.0 494.5L453.0 501.4L454.0 501.6L455.0 496.2L456.0 491.6L457.0 498.1L458.0 500.4L459.0 502.6L460.0 498.0L461.0 503.7L462.0 502.5L463.0 495.3L464.0 496.5L465.0 494.8L466.0 497.1L467.0 501.6L468.0 496.9L469.0 503.5L470.0 496.3L471.0 494.4L472.0 501.2L473.0 495.3L474.0 498.2L475.0 498.8L476.0 503.6L477.0 498.7L478.0 495.8L479.0 503.2L480.0 499.7L481.0 500.3L482.0 503.0L483.0 495.3L484.0 498.2L485.0 498.2L486.0 495.4L487.0 500.4L488.0 488.9L489.0 499.6L490.0 501.6L491.0 496.4L492.0 497.1L493.0 501.0L494.0 500.8L495.0 495.8L496.0 497.3L497.0 497.0L498.0 495.6L499.0 499.9L500.0 494.5L501.0 498.0L502.0 496.0L503.0 500.8L504.0 495.9L505.0 497.3L506.0 490.8L507.0 498.5L508.0 493.6L509.0 496.2L510.0 493.4L511.0 497.3L512.0 496.6L513.0 503.6L514.0 501.7L515.0 494.9L516.0 496.7L517.0 495.7L518.0 498.7L519.0 495.7L520.0 499.0L521.0 498.1L522.0 494.4L523.0 494.8L524.0 499.2L525.0 497.8L526.0 497.2L527.0 498.4L528.0 498.2L529.0 500.7L530.0 496.3L531.0 501.0L532.0 500.8L533.0 494.2L534.0 492.5L535.0 492.5L536.0 496.9L537.0 499.5L538.0 495.7L539.0 493.3L540.0 497.5L541.0 499.1L542.0 502.8L543.0 502.9L544.0 491.7L545.0 502.2L546.0 499.9L547.0 489.9L548.0 497.2L549.0 501.7L550.0 496.2L551.0 496.2L552.0 497.7L553.0 499.7L554.0 499.0L555.0 503.5L556.0 496.0L557.0 499.4L558.0 501.9L559.0 498.0L560.0 496.4L561.0 496.8L562.0 496.0L563.0 494.4L564.0 499.4L565.0 497.3L566.0 497.1L567.0 502.2L568.0 494.6L569.0 498.9L570.0 497.2L571.0 497.0L572.0 500.3L573.0 495.4L574.0 495.0L575.0 497.4L576.0 503.5L577.0 493.8L578.0 498.3L579.0 499.8L580.0 499.6L581.0 501.1L582.0 499.0L583.0 496.0L584.0 501.2L585.0 497.2L586.0 499.6L587.0 498.6L588.0 499.0L589.0 496.9L590.0 494.8L591.0 497.9L592.0 495.1L593.0 493.4L594.0 502.2L595.0 495.5L596.0 498.7L597.0 498.4L598.0 494.9L599.0 498.5L600.0 499.7L601.0 494.0L602.0 494.6L603.0 496.5L604.0 489.2L605.0 500.7L606.0 502.6L607.0 498.4L608.0 501.2L609.0 496.6L610.0 499.5L611.0 499.5L612.0 497.7L613.0 500.2L614.0 503.5L615.0 499.9L616.0 495.5L617.0 497.0L618.0 494.8L619.0 492.6L620.0 495.0L621.0 497.8L622.0 499.9L623.0 496.2L624.0 492.8L625.0 493.3L626.0 489.1L627.0 500.1L628.0 495.9L629.0 495.5L630.0 493.9L631.0 501.5L632.0 499.7L633.0 497.2L634.0 497.2L635.0 499.5L636.0 496.1L637.0 498.5L638.0 494.2L639.0 499.1L640.0 497.0L641.0 503.4L642.0 497.0L643.0 499.6L644.0 495.4L645.0 498.1L646.0 493.8L647.0 499.2L648.0 502.0L649.0 496.8L650.0 495.8L651.0 499.8L652.0 501.5L653.0 495.2L654.0 494.3L655.0 495.3L656.0 497.3L657.0 497.5L658.0 492.5L659.0 495.0L660.0 500.3L661.0 500.8L662.0 495.6L663.0 495.2L664.0 499.4L665.0 499.8L666.0 494.5L667.0 498.5L668.0 494.9L669.0 500.9L670.0 500.5L671.0 502.8L672.0 497.6L673.0 498.7L674.0 502.7L675.0 497.0L676.0 489.5L677.0 498.1L678.0 493.1L679.0 494.4L680.0 495.9L681.0 498.5L682.0 501.1L683.0 499.5L684.0 498.6L685.0 493.5L686.0 500.3L687.0 499.1L688.0 497.4L689.0 496.2L690.0 494.0L691.0 493.3L692.0 497.9L693.0 491.4L694.0 495.3L695.0 499.8L696.0 500.4L697.0 498.7L698.0 498.2L699.0 494.9L700.0 499.9L701.0 499.2L702.0 500.0L703.0 496.5L704.0 501.9L705.0 495.6L706.0 499.8L707.0 498.0L708.0 496.0L709.0 496.4L710.0 488.6L711.0 500.2L712.0 503.3L713.0 501.5L714.0 494.7L715.0 500.7L716.0 494.1L717.0 498.0L718.0 495.0L719.0 502.1L720.0 494.0L721.0 493.7L722.0 500.2L723.0 493.1L724.0 489.0L725.0 497.3L726.0 500.2L727.0 499.2L728.0 498.2L729.0 494.1L730.0 491.5L731.0 498.6L732.0 498.0L733.0 489.2L734.0 498.9L735.0 495.8L736.0 503.3L737.0 495.1L738.0 494.4L739.0 493.4L740.0 499.1L741.0 502.2L742.0 498.1L743.0 500.5L744.0 502.8L745.0 499.6L746.0 501.6L747.0 491.1L748.0 494.8L749.0 494.4L750.0 500.7L751.0 492.8L752.0 498.4L753.0 494.5L754.0 500.4L755.0 495.2L756.0 502.5L757.0 497.7L758.0 497.9L759.0 501.5L760.0 497.1L761.0 499.0L762.0 498.4L763.0 494.8L764.0 493.0L765.0 497.8L766.0 493.0L767.0 493.9L768.0 494.7L769.0 510.6L770.0 502.0L771.0 492.9L772.0 495.9L773.0 498.4L774.0 497.6L775.0 493.8L776.0 493.2L777.0 487.7L778.0 500.8L779.0 501.8L780.0 496.9L781.0 495.0L782.0 499.3L783.0 494.2L784.0 495.1L785.0 495.5L786.0 499.5L787.0 493.0L788.0 493.9L789.0 492.6L790.0 495.8L791.0 501.1L792.0 491.7L793.0 490.9L794.0 497.4L795.0 489.1L796.0 495.2L797.0 494.9L798.0 501.0L799.0 499.3L800.0 501.7L801.0 495.9L802.0 496.4L803.0 491.3L804.0 500.0L805.0 492.7L806.0 497.7L807.0 496.1L808.0 501.0L809.0 496.9L810.0 498.7L811.0 497.3L812.0 496.4L813.0 495.4L814.0 494.2L815.0 497.0L816.0 499.9L817.0 493.6L818.0 496.7L819.0 487.4L820.0 492.5L821.0 496.0L822.0 494.6L823.0 502.5L824.0 488.7L825.0 490.3L826.0 495.3L827.0 495.3L828.0 499.2L829.0 497.4L830.0 495.7L831.0 497.1L832.0 497.3L833.0 502.7L834.0 499.5L835.0 498.4L836.0 495.0L837.0 495.2L838.0 496.9L839.0 499.3L840.0 499.3L841.0 496.1L842.0 501.3L843.0 497.6L844.0 497.9L845.0 497.7L846.0 491.4L847.0 497.4L848.0 494.1L849.0 491.6L850.0 495.2L851.0 496.9L852.0 501.0L853.0 491.5L854.0 500.5L855.0 503.1L856.0 493.4L857.0 501.7L858.0 500.9L859.0 499.3L860.0 500.8L861.0 503.1L862.0 496.3L863.0 495.3L864.0 494.4L865.0 497.0L866.0 498.3L867.0 498.7L868.0 492.9L869.0 494.2L870.0 498.4L871.0 495.9L872.0 500.9L873.0 495.3L874.0 500.5L875.0 497.4L876.0 497.7L877.0 503.1L878.0 494.7L879.0 497.0L880.0 499.6L881.0 499.3L882.0 497.3L883.0 497.5L884.0 495.5L885.0 496.5L886.0 494.9L887.0 496.1L888.0 501.6L889.0 501.6L890.0 495.4L891.0 495.6L892.0 496.9L893.0 487.5L894.0 499.3L895.0 499.6L896.0 494.7L897.0 499.6L898.0 501.4L899.0 499.5L900.0 495.8L901.0 491.6L902.0 498.5L903.0 493.1L904.0 498.3L905.0 498.3L906.0 499.7L907.0 494.2L908.0 498.4L909.0 493.6L910.0 498.1L911.0 490.9L912.0 496.0L913.0 496.6L914.0 500.7L915.0 492.4L916.0 495.7L917.0 496.4L918.0 496.6L919.0 498.3L920.0 498.4L921.0 495.5L922.0 499.3L923.0 497.1L924.0 489.0L925.0 497.0L926.0 497.5L927.0 493.6L928.0 499.9L929.0 491.9L930.0 496.5L931.0 500.5L932.0 497.0L933.0 498.9L934.0 494.2L935.0 498.1L936.0 494.1L937.0 503.0L938.0 498.0L939.0 494.6L940.0 494.8L941.0 496.3L942.0 494.0L943.0 493.9L944.0 496.5L945.0 495.8L946.0 493.5L947.0 495.9L948.0 503.0L949.0 501.8L950.0 498.7L951.0 494.2L952.0 496.3L953.0 494.3L954.0 493.1L955.0 494.6L956.0 499.7L957.0 490.6L958.0 501.1L959.0 500.9L960.0 498.0L961.0 503.0L962.0 490.8L963.0 488.4L964.0 497.0L965.0 497.8L966.0 502.9L967.0 494.6L968.0 498.8L969.0 500.6L970.0 501.2L971.0 496.8L972.0 497.1L973.0 496.8L974.0 498.5L975.0 502.3L976.0 491.2L977.0 493.4L978.0 498.3L979.0 501.0L980.0 499.7L981.0 493.7L982.0 494.3L983.0 495.0L984.0 491.8L985.0 498.0L986.0 490.8L987.0 495.3L988.0 498.6L989.0 494.0L990.0 494.7L991.0 498.3L992.0 489.2L993.0 501.7L994.0 494.7L995.0 494.2L996.0 498.2L997.0 495.4L998.0 490.7L999.0 499.6L1000.0 499.5L1001.0 496.7L1002.0 493.5L1003.0 491.2L1004.0 493.2L1005.0 499.5L1006.0 491.1L1007.0 492.6L1008.0 491.3L1009.0 501.4L1010.0 501.5L1011.0 497.7L1012.0 496.9L1013.0 495.2L1014.0 499.3L1015.0 499.2L1016.0 493.5L1017.0 501.9L1018.0 499.6L1019.0 494.9L1020.0 492.2L1021.0 493.9L1022.0 488.8L1023.0 493.8L1024.0 492.2L1025.0 491.7L1026.0 494.7L1027.0 499.9L1028.0 495.9L1029.0 495.6L1030.0 498.1L1031.0 492.1L1032.0 496.8L1033.0 500.5L1034.0 494.7L1035.0 498.6L1036.0 492.6L1037.0 501.6L1038.0 501.3L1039.0 494.5L1040.0 493.6L1041.0 494.2L1042.0 488.5L1043.0 495.4L1044.0 496.5L1045.0 491.1L1046.0 495.7L1047.0 492.7L1048.0 489.2L1049.0 494.9L1050.0 494.6L1051.0 496.6L1052.0 492.5L1053.0 491.5L1054.0 483.5L1055.0 491.1L1056.0 485.6L1057.0 493.0L1058.0 493.0L1059.0 494.6L1060.0 488.1L1061.0 493.0L1062.0 494.4L1063.0 498.6L1064.0 493.6L1065.0 489.4L1066.0 500.7L1067.0 497.6L1068.0 496.7L1069.0 496.2L1070.0 492.4L1071.0 494.2L1072.0 491.9L1073.0 491.2L1074.0 486.5L1075.0 481.5L1076.0 485.0L1077.0 493.1L1078.0 491.3L1079.0 493.5L1080.0 496.9L1081.0 490.1L1082.0 486.9L1083.0 495.8L1084.0 491.7L1085.0 491.7L1086.0 499.9L1087.0 482.7L1088.0 484.7L1089.0 485.9L1090.0 486.7L1091.0 495.0L1092.0 499.6L1093.0 491.3L1094.0 490.5L1095.0 492.1L1096.0 492.8L1097.0 486.1L1098.0 487.0L1099.0 490.7L1100.0 492.9L1101.0 479.8L1102.0 486.5L1103.0 489.8L1104.0 496.4L1105.0 497.6L1106.0 499.1L1107.0 491.3L1108.0 488.6L1109.0 490.8L1110.0 489.9L1111.0 488.6L1112.0 485.7L1113.0 498.3L1114.0 495.7L1115.0 485.2L1116.0 488.1L1117.0 486.9L1118.0 494.3L1119.0 481.8L1120.0 488.6L1121.0 490.1L1122.0 493.1L1123.0 487.3L1124.0 487.2L1125.0 488.4L1126.0 478.8L1127.0 480.8L1128.0 486.9L1129.0 489.8L1130.0 488.8L1131.0 484.1L1132.0 496.5L1133.0 483.7L1134.0 486.4L1135.0 472.4L1136.0 482.0L1137.0 485.3L1138.0 483.7L1139.0 487.5L1140.0 487.6L1141.0 483.5L1142.0 494.8L1143.0 482.5L1144.0 492.9L1145.0 486.6L1146.0 486.4L1147.0 476.8L1148.0 470.8L1149.0 471.3L1150.0 483.8L1151.0 481.8L1152.0 479.7L1153.0 478.6L1154.0 471.6L1155.0 474.4L1156.0 478.9L1157.0 464.8L1158.0 471.8L1159.0 464.6L1160.0 478.1L1161.0 473.1L1162.0 474.6L1163.0 459.7L1164.0 484.3L1165.0 474.3L1166.0 487.2L1167.0 473.0L1168.0 462.6L1169.0 466.9L1170.0 473.2L1171.0 477.7L1172.0 469.4L1173.0 483.3L1174.0 484.5L1175.0 485.2L1176.0 471.8L1177.0 485.2L1178.0 470.0L1179.0 466.4L1180.0 469.0L1181.0 475.1L1182.0 470.8L1183.0 483.7L1184.0 472.3L1185.0 460.3L1186.0 461.9L1187.0 486.5L1188.0 474.1L1189.0 476.2L1190.0 465.8L1191.0 471.0L1192.0 473.9L1193.0 478.3L1194.0 471.6L1195.0 451.3L1196.0 472.1L1197.0 473.8L1198.0 482.8L1199.0 468.8L1200.0 468.4L1201.0 470.2L1202.0 469.8L1203.0 461.4L1204.0 462.4L1205.0 457.3L1206.0 465.5L1207.0 464.0L1208.0 470.8L1209.0 480.2L1210.0 481.2L1211.0 466.3L1212.0 469.6L1213.0 465.8L1214.0 487.6L1215.0 472.5L1216.0 469.5L1217.0 473.8L1218.0 472.8L1219.0 486.5L1220.0 471.3L1221.0 458.8L1222.0 480.5L1223.0 465.1L1224.0 450.3L1225.0 468.2L1226.0 456.6L1227.0 469.1L1228.0 466.0L1229.0 463.4L1230.0 469.5L1231.0 457.4L1232.0 486.4L1233.0 443.1L1234.0 486.3L1235.0 482.9L1236.0 468.6L1237.0 479.8L1238.0 472.1L1239.0 455.2L1240.0 462.8L1241.0 436.7L1242.0 468.7L1243.0 467.0L1244.0 485.6L1245.0 467.6L1246.0 471.7L1247.0 462.6L1248.0 466.7L1249.0 473.3L1250.0 485.3L1251.0 459.3L1252.0 473.6L1253.0 483.7L1254.0 462.7L1255.0 485.0L1256.0 472.6L1257.0 484.9L1258.0 469.3L1259.0 483.3L1260.0 436.9L1261.0 454.8L1262.0 461.3L1263.0 462.5L1264.0 459.2L1265.0 457.2L1266.0 462.9L1267.0 476.8L1268.0 463.8L1269.0 436.5L1270.0 469.1L1271.0 461.0L1272.0 476.4L1273.0 460.4L1274.0 470.0L1275.0 439.9L1276.0 468.7L1277.0 459.4L1278.0 457.9L1279.0 462.9L1280.0 460.8L1281.0 466.9L1282.0 462.5L1283.0 461.9L1284.0 454.8L1285.0 449.9L1286.0 463.5L1287.0 447.9L1288.0 463.0L1289.0 473.0L1290.0 467.3L1291.0 469.7L1292.0 464.8L1293.0 461.5L1294.0 459.6L1295.0 449.1L1296.0 453.6L1297.0 466.4L1298.0 455.5L1299.0 462.2L1300.0 452.8L1301.0 447.6L1302.0 462.5L1303.0 452.7L1304.0 445.9L1305.0 457.1L1306.0 473.3L1307.0 462.4L1308.0 471.1L1309.0 450.0L1310.0 458.8L1311.0 457.5L1312.0 441.2L1313.0 452.7L1314.0 459.4L1315.0 481.2L1316.0 466.8L1317.0 468.7L1318.0 463.1L1319.0 474.9L1320.0 454.0L1321.0 446.9L1322.0 464.9L1323.0 477.3L1324.0 459.7L1325.0 463.5L1326.0 449.7L1327.0 461.5L1328.0 469.2L1329.0 476.4L1330.0 460.7L1331.0 482.2L1332.0 473.2L1333.0 452.6L1334.0 462.5L1335.0 461.2L1336.0 463.4L1337.0 476.4L1338.0 465.1L1339.0 455.4L1340.0 454.7L1341.0 472.4L1342.0 459.7L1343.0 450.1L1344.0 457.7L1345.0 440.3L1346.0 460.4L1347.0 479.1L1348.0 460.6L1349.0 458.6L1350.0 452.7L1351.0 454.6L1352.0 443.0L1353.0 453.4L1354.0 458.0L1355.0 466.2L1356.0 462.9L1357.0 445.2L1358.0 438.4L1359.0 456.1L1360.0 457.8L1361.0 462.1L1362.0 456.7L1363.0 458.5L1364.0 464.7L1365.0 448.0L1366.0 471.3L1367.0 456.2L1368.0 455.7L1369.0 449.5L1370.0 459.0L1371.0 468.4L1372.0 457.8L1373.0 468.9L1374.0 436.6L1375.0 465.2L1376.0 425.2L1377.0 479.1L1378.0 470.0L1379.0 439.0L1380.0 456.9L1381.0 471.6L1382.0 445.6L1383.0 426.1L1384.0 452.7L1385.0 441.4L1386.0 470.1L1387.0 459.9L1388.0 449.2L1389.0 449.2L1390.0 460.4L1391.0 458.9L1392.0 459.1L1393.0 461.2L1394.0 457.7L1395.0 457.7L1396.0 443.4L1397.0 469.0L1398.0 442.1L1399.0 424.3L1400.0 446.2L1401.0 454.8L1402.0 461.1L1403.0 454.9L1404.0 464.6L1405.0 443.4L1406.0 448.2L1407.0 435.4L1408.0 442.1L1409.0 434.0L1410.0 423.1L1411.0 430.6L1412.0 403.6L1413.0 427.0L1414.0 450.5L1415.0 434.0L1416.0 431.3L1417.0 440.8L1418.0 430.8L1419.0 432.9L1420.0 420.9L1421.0 443.1L1422.0 455.7L1423.0 447.9L1424.0 471.0L1425.0 471.8L1426.0 457.7L1427.0 449.7L1428.0 452.4L1429.0 423.3L1430.0 458.7L1431.0 460.6L1432.0 410.7L1433.0 465.6L1434.0 429.6L1435.0 443.2L1436.0 471.6L1437.0 426.0L1438.0 446.5L1439.0 435.4L1440.0 437.7L1441.0 435.8L1442.0 411.1L1443.0 406.8L1444.0 436.7L1445.0 443.9L1446.0 426.6L1447.0 433.4L1448.0 471.4L1449.0 433.6L1450.0 446.9L1451.0 444.7L1452.0 463.9L1453.0 411.3L1454.0 433.6L1455.0 417.3L1456.0 448.3L1457.0 444.8L1458.0 443.7L1459.0 429.9L1460.0 436.3L1461.0 450.4L1462.0 421.3L1463.0 433.4L1464.0 458.0L1465.0 449.5L1466.0 428.5L1467.0 443.3L1468.0 421.4L1469.0 461.0L1470.0 450.5L1471.0 456.1L1472.0 457.0L1473.0 422.3L1474.0 428.0L1475.0 442.6L1476.0 445.9L1477.0 417.4L1478.0 420.1L1479.0 474.1L1480.0 445.7L1481.0 474.4L1482.0 468.1L1483.0 455.3L1484.0 462.8L1485.0 437.5L1486.0 452.7L1487.0 450.4L1488.0 448.5L1489.0 422.7L1490.0 443.6L1491.0 435.3L1492.0 421.8L1495 514L70.0 514Z" fill="#e24d42" fill-opacity="0.08"/>
<path d="M70.0 514.0L71.0 514.0L72.0 514.0L73.0 514.0L74.0 514.0L75.0 514.0L76.0 514.0L77.0 514.0L78.0 514.0L79.0 514.0L80.0 514.0L81.0 514.0L82.0 514.0L83.0 514.0L84.0 514.0L85.0 514.0L86.0 514.0L87.0 514.0L88.0 514.0L89.0 514.0L90.0 514.0L91.0 514.0L92.0 514.0L93.0 514.0L94.0 514.0L95.0 514.0L96.0 514.0L97.0 514.0L98.0 514.0L99.0 514.0L100.0 514.0L101.0 514.0L102.0 514.0L103.0 514.0L104.0 514.0L105.0 514.0L106.0 514.0L107.0 514.0L108.0 514.0L109.0 514.0L110.0 514.0L111.0 514.0L112.0 514.0L113.0 514.0L114.0 514.0L115.0 514.0L116.0 514.0L117.0 514.0L118.0 514.0L119.0 514.0L120.0 514.0L121.0 514.0L122.0 514.0L123.0 514.0L124.0 514.0L125.0 514.0L126.0 514.0L127.0 514.0L128.0 514.0L129.0 514.0L130.0 514.0L131.0 514.0L132.0 514.0L133.0 514.0L134.0 514.0L135.0 514.0L136.0 514.0L137.0 514.0L138.0 514.0L139.0 514.0L140.0 514.0L141.0 514.0L142.0 514.0L143.0 514.0L144.0 514.0L145.0 514.0L146.0 514.0L147.0 514.0L148.0 514.0L149.0 514.0L150.0 514.0L151.0 514.0L152.0 514.0L153.0 514.0L154.0 514.0L155.0 514.0L156.0 514.0L157.0 514.0L158.0 514.0L159.0 514.0L160.0 514.0L161.0 514.0L162.0 514.0L163.0 514.0L164.0 514.0L165.0 514.0L166.0 514.0L167.0 514.0L168.0 514.0L169.0 514.0L170.0 514.0L171.0 514.0L172.0 514.0L173.0 514.0L174.0 514.0L175.0 514.0L176.0 514.0L177.0 514.0L178.0 514.0L179.0 514.0L180.0 514.0L181.0 514.0L182.0 514.0L183.0 514.0L184.0 514.0L185.0 514.0L186.0 514.0L187.0 514.0L188.0 514.0L189.0 514.0L190.0 514.0L191.0 514.0L192.0 514.0L193.0 514.0L194.0 514.0L195.0 514.0L196.0 514.0L197.0 514.0L198.0 514.0L199.0 514.0L200.0 514.0L201.0 514.0L202.0 514.0L203.0 514.0L204.0 514.0L205.0 514.0L206.0 514.0L207.0 514.0L208.0 514.0L209.0 514.0L210.0 514.0L211.0 514.0L212.0 514.0L213.0 514.0L214.0 514.0L215.0 514.0L216.0 514.0L217.0 514.0L218.0 514.0L219.0 514.0L220.0 514.0L221.0 514.0L222.0 514.0L223.0 514.0L224.0 514.0L225.0 514.0L226.0 514.0L227.0 514.0L228.0 514.0L229.0 514.0L230.0 514.0L231.0 514.0L232.0 514.0L233.0 514.0L234.0 514.0L235.0 514.0L236.0 514.0L237.0 514.0L238.0 514.0L239.0 514.0L240.0 514.0L241.0 514.0L242.0 514.0L243.0 514.0L244.0 514.0L245.0 514.0L246.0 514.0L247.0 514.0L248.0 514.0L249.0 514.0L250.0 514.0L251.0 514.0L252.0 514.0L253.0 514.0L254.0 514.0L255.0 514.0L256.0 514.0L257.0 514.0L258.0 514.0L259.0 514.0L260.0 514.0L261.0 514.0L262.0 514.0L263.0 514.0L264.0 514.0L265.0 514.0L266.0 514.0L267.0 514.0L268.0 514.0L269.0 514.0L270.0 514.0L271.0 514.0L272.0 514.0L273.0 514.0L274.0 514.0L275.0 514.0L276.0 514.0L277.0 514.0L278.0 514.0L279.0 514.0L280.0 514.0L281.0 514.0L282.0 514.0L283.0 514.0L284.0 514.0L285.0 514.0L286.0 514.0L287.0 514.0L288.0 514.0L289.0 514.0L290.0 514.0L291.0 514.0L292.0 514.0L293.0 514.0L294.0 514.0L295.0 514.0L296.0 514.0L297.0 514.0L298.0 514.0L299.0 514.0L300.0 514.0L301.0 514.0L302.0 514.0L303.0 514.0L304.0 514.0L305.0 514.0L306.0 514.0L307.0 514.0L308.0 514.0L309.0 514.0L310.0 514.0L311.0 514.0L312.0 514.0L313.0 514.0L314.0 514.0L315.0 514.0L316.0 514.0L317.0 514.0L318.0 514.0L319.0 514.0L320.0 514.0L321.0 514.0L322.0 514.0L323.0 514.0L324.0 514.0L325.0 514.0L326.0 514.0L327.0 514.0L328.0 514.0L329.0 514.0L330.0 514.0L331.0 514.0L332.0 514.0L333.0 514.0L334.0 514.0L335.0 514.0L336.0 514.0L337.0 514.0L338.0 514.0L339.0 514.0L340.0 514.0L341.0 514.0L342.0 514.0L343.0 514.0L344.0 514.0L345.0 514.0L346.0 514.0L347.0 514.0L348.0 514.0L349.0 513.8L350.0 513.7L351.0 513.6L352.0 513.3L353.0 513.2L354.0 513.2L355.0 513.2L356.0 513.0L357.0 512.7L358.0 512.3L359.0 512.3L360.0 512.7L361.0 512.6L362.0 511.8L363.0 511.8L364.0 512.1L365.0 511.3L366.0 510.8L367.0 510.9L368.0 511.1L369.0 510.3L370.0 511.1L371.0 511.0L372.0 510.9L373.0 508.8L374.0 508.3L375.0 509.6L376.0 508.9L377.0 508.7L378.0 508.0L379.0 507.5L380.0 507.7L381.0 508.2L382.0 508.4L383.0 508.7L384.0 509.6L385.0 507.2L386.0 507.9L387.0 506.5L388.0 506.5L389.0 507.5L390.0 506.6L391.0 504.8L392.0 504.8L393.0 506.2L394.0 505.6L395.0 502.9L396.0 503.1L397.0 502.6L398.0 497.1L399.0 500.9L400.0 501.8L401.0 496.4L402.0 502.8L403.0 503.2L404.0 497.8L405.0 501.6L406.0 503.1L407.0 500.2L408.0 505.5L409.0 499.9L410.0 500.8L411.0 500.0L412.0 502.5L413.0 497.2L414.0 499.5L415.0 500.2L416.0 499.1L417.0 502.0L418.0 500.1L419.0 503.6L420.0 502.4L421.0 498.7L422.0 499.0L423.0 497.2L424.0 500.8L425.0 499.2L426.0 500.7L427.0 498.0L428.0 496.4L429.0 495.4L430.0 496.7L431.0 500.6L432.0 497.7L433.0 501.3L434.0 503.7L435.0 497.8L436.0 498.1L437.0 496.2L438.0 496.0L439.0 501.8L440.0 500.9L441.0 498.3L442.0 498.1L443.0 497.2L444.0 502.0L445.0 499.0L446.0 496.5L447.0 492.9L448.0 501.9L449.0 493.7L450.0 499.1L451.0 502.4L452.0 494.5L453.0 501.4L454.0 501.6L455.0 496.2L456.0 491.6L457.0 498.1L458.0 500.4L459.0 502.6L460.0 498.0L461.0 503.7L462.0 502.5L463.0 495.3L464.0 496.5L465.0 494.8L466.0 497.1L467.0 501.6L468.0 496.9L469.0 503.5L470.0 496.3L471.0 494.4L472.0 501.2L473.0 495.3L474.0 498.2L475.0 498.8L476.0 503.6L477.0 498.7L478.0 495.8L479.0 503.2L480.0 499.7L481.0 500.3L482.0 503.0L483.0 495.3L484.0 498.2L485.0 498.2L486.0 495.4L487.0 500.4L488.0 488.9L489.0 499.6L490.0 501.6L491.0 496.4L492.0 497.1L493.0 501.0L494.0 500.8L495.0 495.8L496.0 497.3L497.0 497.0L498.0 495.6L499.0 499.9L500.0 494.5L501.0 498.0L502.0 496.0L503.0 500.8L504.0 495.9L505.0 497.3L506.0 490.8L507.0 498.5L508.0 493.6L509.0 496.2L510.0 493.4L511.0 497.3L512.0 496.6L513.0 503.6L514.0 501.7L515.0 494.9L516.0 496.7L517.0 495.7L518.0 498.7L519.0 495.7L520.0 499.0L521.0 498.1L522.0 494.4L523.0 494.8L524.0 499.2L525.0 497.8L526.0 497.2L527.0 498.4L528.0 498.2L529.0 500.7L530.0 496.3L531.0 501.0L532.0 500.8L533.0 494.2L534.0 492.5L535.0 492.5L536.0 496.9L537.0 499.5L538.0 495.7L539.0 493.3L540.0 497.5L541.0 499.1L542.0 502.8L543.0 502.9L544.0 491.7L545.0 502.2L546.0 499.9L547.0 489.9L548.0 497.2L549.0 501.7L550.0 496.2L551.0 496.2L552.0 497.7L553.0 499.7L554.0 499.0L555.0 503.5L556.0 496.0L557.0 499.4L558.0 501.9L559.0 498.0L560.0 496.4L561.0 496.8L562.0 496.0L563.0 494.4L564.0 499.4L565.0 497.3L566.0 497.1L567.0 502.2L568.0 494.6L569.0 498.9L570.0 497.2L571.0 497.0L572.0 500.3L573.0 495.4L574.0 495.0L575.0 497.4L576.0 503.5L577.0 493.8L578.0 498.3L579.0 499.8L580.0 499.6L581.0 501.1L582.0 499.0L583.0 496.0L584.0 501.2L585.0 497.2L586.0 499.6L587.0 498.6L588.0 499.0L589.0 496.9L590.0 494.8L591.0 497.9L592.0 495.1L593.0 493.4L594.0 502.2L595.0 495.5L596.0 498.7L597.0 498.4L598.0 494.9L599.0 498.5L600.0 499.7L601.0 494.0L602.0 494.6L603.0 496.5L604.0 489.2L605.0 500.7L606.0 502.6L607.0 498.4L608.0 501.2L609.0 496.6L610.0 499.5L611.0 499.5L612.0 497.7L613.0 500.2L614.0 503.5L615.0 499.9L616.0 495.5L617.0 497.0L618.0 494.8L619.0 492.6L620.0 495.0L621.0 497.8L622.0 499.9L623.0 496.2L624.0 492.8L625.0 493.3L626.0 489.1L627.0 500.1L628.0 495.9L629.0 495.5L630.0 493.9L631.0 501.5L632.0 499.7L633.0 497.2L634.0 497.2L635.0 499.5L636.0 496.1L637.0 498.5L638.0 494.2L639.0 499.1L640.0 497.0L641.0 503.4L642.0 497.0L643.0 499.6L644.0 495.4L645.0 498.1L646.0 493.8L647.0 499.2L648.0 502.0L649.0 496.8L650.0 495.8L651.0 499.8L652.0 501.5L653.0 495.2L654.0 494.3L655.0 495.3L656.0 497.3L657.0 497.5L658.0 492.5L659.0 495.0L660.0 500.3L661.0 500.8L662.0 495.6L663.0 495.2L664.0 499.4L665.0 499.8L666.0 494.5L667.0 498.5L668.0 494.9L669.0 500.9L670.0 500.5L671.0 502.8L672.0 497.6L673.0 498.7L674.0 502.7L675.0 497.0L676.0 489.5L677.0 498.1L678.0 493.1L679.0 494.4L680.0 495.9L681.0 498.5L682.0 501.1L683.0 499.5L684.0 498.6L685.0 493.5L686.0 500.3L687.0 499.1L688.0 497.4L689.0 496.2L690.0 494.0L691.0 493.3L692.0 497.9L693.0 491.4L694.0 495.3L695.0 499.8L696.0 500.4L697.0 498.7L698.0 498.2L699.0 494.9L700.0 499.9L701.0 499.2L702.0 500.0L703.0 496.5L704.0 501.9L705.0 495.6L706.0 499.8L707.0 498.0L708.0 496.0L709.0 496.4L710.0 488.6L711.0 500.2L712.0 503.3L713.0 501.5L714.0 494.7L715.0 500.7L716.0 494.1L717.0 498.0L718.0 495.0L719.0 502.1L720.0 494.0L721.0 493.7L722.0 500.2L723.0 493.1L724.0 489.0L725.0 497.3L726.0 500.2L727.0 499.2L728.0 498.2L729.0 494.1L730.0 491.5L731.0 498.6L732.0 498.0L733.0 489.2L734.0 498.9L735.0 495.8L736.0 503.3L737.0 495.1L738.0 494.4L739.0 493.4L740.0 499.1L741.0 502.2L742.0 498.1L743.0 500.5L744.0 502.8L745.0 499.6L746.0 501.6L747.0 491.1L748.0 494.8L749.0 494.4L750.0 500.7L751.0 492.8L752.0 498.4L753.0 494.5L754.0 500.4L755.0 495.2L756.0 502.5L757.0 497.7L758.0 497.9L759.0 501.5L760.0 497.1L761.0 499.0L762.0 498.4L763.0 494.8L764.0 493.0L765.0 497.8L766.0 493.0L767.0 493.9L768.0 494.7L769.0 510.6L770.0 502.0L771.0 492.9L772.0 495.9L773.0 498.4L774.0 497.6L775.0 493.8L776.0 493.2L777.0 487.7L778.0 500.8L779.0 501.8L780.0 496.9L781.0 495.0L782.0 499.3L783.0 494.2L784.0 495.1L785.0 495.5L786.0 499.5L787.0 493.0L788.0 493.9L789.0 492.6L790.0 495.8L791.0 501.1L792.0 491.7L793.0 490.9L794.0 497.4L795.0 489.1L796.0 495.2L797.0 494.9L798.0 501.0L799.0 499.3L800.0 501.7L801.0 495.9L802.0 496.4L803.0 491.3L804.0 500.0L805.0 492.7L806.0 497.7L807.0 496.1L808.0 501.0L809.0 496.9L810.0 498.7L811.0 497.3L812.0 496.4L813.0 495.4L814.0 494.2L815.0 497.0L816.0 499.9L817.0 493.6L818.0 496.7L819.0 487.4L820.0 492.5L821.0 496.0L822.0 494.6L823.0 502.5L824.0 488.7L825.0 490.3L826.0 495.3L827.0 495.3L828.0 499.2L829.0 497.4L830.0 495.7L831.0 497.1L832.0 497.3L833.0 502.7L834.0 499.5L835.0 498.4L836.0 495.0L837.0 495.2L838.0 496.9L839.0 499.3L840.0 499.3L841.0 496.1L842.0 501.3L843.0 497.6L844.0 497.9L845.0 497.7L846.0 491.4L847.0 497.4L848.0 494.1L849.0 491.6L850.0 495.2L851.0 496.9L852.0 501.0L853.0 491.5L854.0 500.5L855.0 503.1L856.0 493.4L857.0 501.7L858.0 500.9L859.0 499.3L860.0 500.8L861.0 503.1L862.0 496.3L863.0 495.3L864.0 494.4L865.0 497.0L866.0 498.3L867.0 498.7L868.0 492.9L869.0 494.2L870.0 498.4L871.0 495.9L872.0 500.9L873.0 495.3L874.0 500.5L875.0 497.4L876.0 497.7L877.0 503.1L878.0 494.7L879.0 497.0L880.0 499.6L881.0 499.3L882.0 497.3L883.0 497.5L884.0 495.5L885.0 496.5L886.0 494.9L887.0 496.1L888.0 501.6L889.0 501.6L890.0 495.4L891.0 495.6L892.0 496.9L893.0 487.5L894.0 499.3L895.0 499.6L896.0 494.7L897.0 499.6L898.0 501.4L899.0 499.5L900.0 495.8L901.0 491.6L902.0 498.5L903.0 493.1L904.0 498.3L905.0 498.3L906.0 499.7L907.0 494.2L908.0 498.4L909.0 493.6L910.0 498.1L911.0 490.9L912.0 496.0L913.0 496.6L914.0 500.7L915.0 492.4L916.0 495.7L917.0 496.4L918.0 496.6L919.0 498.3L920.0 498.4L921.0 495.5L922.0 499.3L923.0 497.1L924.0 489.0L925.0 497.0L926.0 497.5L927.0 493.6L928.0 499.9L929.0 491.9L930.0 496.5L931.0 500.5L932.0 497.0L933.0 498.9L934.0 494.2L935.0 498.1L936.0 494.1L937.0 503.0L938.0 498.0L939.0 494.6L940.0 494.8L941.0 496.3L942.0 494.0L943.0 493.9L944.0 496.5L945.0 495.8L946.0 493.5L947.0 495.9L948.0 503.0L949.0 501.8L950.0 498.7L951.0 494.2L952.0 496.3L953.0 494.3L954.0 493.1L955.0 494.6L956.0 499.7L957.0 490.6L958.0 501.1L959.0 500.9L960.0 498.0L961.0 503.0L962.0 490.8L963.0 488.4L964.0 497.0L965.0 497.8L966.0 502.9L967.0 494.6L968.0 498.8L969.0 500.6L970.0 501.2L971.0 496.8L972.0 497.1L973.0 496.8L974.0 498.5L975.0 502.3L976.0 491.2L977.0 493.4L978.0 498.3L979.0 501.0L980.0 499.7L981.0 493.7L982.0 494.3L983.0 495.0L984.0 491.8L985.0 498.0L986.0 490.8L987.0 495.3L988.0 498.6L989.0 494.0L990.0 494.7L991.0 498.3L992.0 489.2L993.0 501.7L994.0 494.7L995.0 494.2L996.0 498.2L997.0 495.4L998.0 490.7L999.0 499.6L1000.0 499.5L1001.0 496.7L1002.0 493.5L1003.0 491.2L1004.0 493.2L1005.0 499.5L1006.0 491.1L1007.0 492.6L1008.0 491.3L1009.0 501.4L1010.0 501.5L1011.0 497.7L1012.0 496.9L1013.0 495.2L1014.0 499.3L1015.0 499.2L1016.0 493.5L1017.0 501.9L1018.0 499.6L1019.0 494.9L1020.0 492.2L1021.0 493.9L1022.0 488.8L1023.0 493.8L1024.0 492.2L1025.0 491.7L1026.0 494.7L1027.0 499.9L1028.0 495.9L1029.0 495.6L1030.0 498.1L1031.0 492.1L1032.0 496.8L1033.0 500.5L1034.0 494.7L1035.0 498.6L1036.0 492.6L1037.0 501.6L1038.0 501.3L1039.0 494.5L1040.0 493.6L1041.0 494.2L1042.0 488.5L1043.0 495.4L1044.0 496.5L1045.0 491.1L1046.0 495.7L1047.0 492.7L1048.0 489.2L1049.0 494.9L1050.0 494.6L1051.0 496.6L1052.0 492.5L1053.0 491.5L1054.0 483.5L1055.0 491.1L1056.0 485.6L1057.0 493.0L1058.0 493.0L1059.0 494.6L1060.0 488.1L1061.0 493.0L1062.0 494.4L1063.0 498.6L1064.0 493.6L1065.0 489.4L1066.0 500.7L1067.0 497.6L1068.0 496.7L1069.0 496.2L1070.0 492.4L1071.0 494.2L1072.0 491.9L1073.0 491.2L1074.0 486.5L1075.0 481.5L1076.0 485.0L1077.0 493.1L1078.0 491.3L1079.0 493.5L1080.0 496.9L1081.0 490.1L1082.0 486.9L1083.0 495.8L1084.0 491.7L1085.0 491.7L1086.0 499.9L1087.0 482.7L1088.0 484.7L1089.0 485.9L1090.0 486.7L1091.0 495.0L1092.0 499.6L1093.0 491.3L1094.0 490.5L1095.0 492.1L1096.0 492.8L1097.0 486.1L1098.0 487.0L1099.0 490.7L1100.0 492.9L1101.0 479.8L1102.0 486.5L1103.0 489.8L1104.0 496.4L1105.0 497.6L1106.0 499.1L1107.0 491.3L1108.0 488.6L1109.0 490.8L1110.0 489.9L1111.0 488.6L1112.0 485.7L1113.0 498.3L1114.0 495.7L1115.0 485.2L1116.0 488.1L1117.0 486.9L1118.0 494.3L1119.0 481.8L1120.0 488.6L1121.0 490.1L1122.0 493.1L1123.0 487.3L1124.0 487.2L1125.0 488.4L1126.0 478.8L1127.0 480.8L1128.0 486.9L1129.0 489.8L1130.0 488.8L1131.0 484.1L1132.0 496.5L1133.0 483.7L1134.0 486.4L1135.0 472.4L1136.0 482.0L1137.0 485.3L1138.0 483.7L1139.0 487.5L1140.0 487.6L1141.0 483.5L1142.0 494.8L1143.0 482.5L1144.0 492.9L1145.0 486.6L1146.0 486.4L1147.0 476.8L1148.0 470.8L1149.0 471.3L1150.0 483.8L1151.0 481.8L1152.0 479.7L1153.0 478.6L1154.0 471.6L1155.0 474.4L1156.0 478.9L1157.0 464.8L1158.0 471.8L1159.0 464.6L1160.0 478.1L1161.0 473.1L1162.0 474.6L1163.0 459.7L1164.0 484.3L1165.0 474.3L1166.0 487.2L1167.0 473.0L1168.0 462.6L1169.0 466.9L1170.0 473.2L1171.0 477.7L1172.0 469.4L1173.0 483.3L1174.0 484.5L1175.0 485.2L1176.0 471.8L1177.0 485.2L1178.0 470.0L1179.0 466.4L1180.0 469.0L1181.0 475.1L1182.0 470.8L1183.0 483.7L1184.0 472.3L1185.0 460.3L1186.0 461.9L1187.0 486.5L1188.0 474.1L1189.0 476.2L1190.0 465.8L1191.0 471.0L1192.0 473.9L1193.0 478.3L1194.0 471.6L1195.0 451.3L1196.0 472.1L1197.0 473.8L1198.0 482.8L1199.0 468.8L1200.0 468.4L1201.0 470.2L1202.0 469.8L1203.0 461.4L1204.0 462.4L1205.0 457.3L1206.0 465.5L1207.0 464.0L1208.0 470.8L1209.0 480.2L1210.0 481.2L1211.0 466.3L1212.0 469.6L1213.0 465.8L1214.0 487.6L1215.0 472.5L1216.0 469.5L1217.0 473.8L1218.0 472.8L1219.0 486.5L1220.0 471.3L1221.0 458.8L1222.0 480.5L1223.0 465.1L1224.0 450.3L1225.0 468.2L1226.0 456.6L1227.0 469.1L1228.0 466.0L1229.0 463.4L1230.0 469.5L1231.0 457.4L1232.0 486.4L1233.0 443.1L1234.0 486.3L1235.0 482.9L1236.0 468.6L1237.0 479.8L1238.0 472.1L1239.0 455.2L1240.0 462.8L1241.0 436.7L1242.0 468.7L1243.0 467.0L1244.0 485.6L1245.0 467.6L1246.0 471.7L1247.0 462.6L1248.0 466.7L1249.0 473.3L1250.0 485.3L1251.0 459.3L1252.0 473.6L1253.0 483.7L1254.0 462.7L1255.0 485.0L1256.0 472.6L1257.0 484.9L1258.0 469.3L1259.0 483.3L1260.0 436.9L1261.0 454.8L1262.0 461.3L1263.0 462.5L1264.0 459.2L1265.0 457.2L1266.0 462.9L1267.0 476.8L1268.0 463.8L1269.0 436.5L1270.0 469.1L1271.0 461.0L1272.0 476.4L1273.0 460.4L1274.0 470.0L1275.0 439.9L1276.0 468.7L1277.0 459.4L1278.0 457.9L1279.0 462.9L1280.0 460.8L1281.0 466.9L1282.0 462.5L1283.0 461.9L1284.0 454.8L1285.0 449.9L1286.0 463.5L1287.0 447.9L1288.0 463.0L1289.0 473.0L1290.0 467.3L1291.0 469.7L1292.0 464.8L1293.0 461.5L1294.0 459.6L1295.0 449.1L1296.0 453.6L1297.0 466.4L1298.0 455.5L1299.0 462.2L1300.0 452.8L1301.0 447.6L1302.0 462.5L1303.0 452.7L1304.0 445.9L1305.0 457.1L1306.0 473.3L1307.0 462.4L1308.0 471.1L1309.0 450.0L1310.0 458.8L1311.0 457.5L1312.0 441.2L1313.0 452.7L1314.0 459.4L1315.0 481.2L1316.0 466.8L1317.0 468.7L1318.0 463.1L1319.0 474.9L1320.0 454.0L1321.0 446.9L1322.0 464.9L1323.0 477.3L1324.0 459.7L1325.0 463.5L1326.0 449.7L1327.0 461.5L1328.0 469.2L1329.0 476.4L1330.0 460.7L1331.0 482.2L1332.0 473.2L1333.0 452.6L1334.0 462.5L1335.0 461.2L1336.0 463.4L1337.0 476.4L1338.0 465.1L1339.0 455.4L1340.0 454.7L1341.0 472.4L1342.0 459.7L1343.0 450.1L1344.0 457.7L1345.0 440.3L1346.0 460.4L1347.0 479.1L1348.0 460.6L1349.0 458.6L1350.0 452.7L1351.0 454.6L1352.0 443.0L1353.0 453.4L1354.0 458.0L1355.0 466.2L1356.0 462.9L1357.0 445.2L1358.0 438.4L1359.0 456.1L1360.0 457.8L1361.0 462.1L1362.0 456.7L1363.0 458.5L1364.0 464.7L1365.0 448.0L1366.0 471.3L1367.0 456.2L1368.0 455.7L1369.0 449.5L1370.0 459.0L1371.0 468.4L1372.0 457.8L1373.0 468.9L1374.0 436.6L1375.0 465.2L1376.0 425.2L1377.0 479.1L1378.0 470.0L1379.0 439.0L1380.0 456.9L1381.0 471.6L1382.0 445.6L1383.0 426.1L1384.0 452.7L1385.0 441.4L1386.0 470.1L1387.0 459.9L1388.0 449.2L1389.0 449.2L1390.0 460.4L1391.0 458.9L1392.0 459.1L1393.0 461.2L1394.0 457.7L1395.0 457.7L1396.0 443.4L1397.0 469.0L1398.0 442.1L1399.0 424.3L1400.0 446.2L1401.0 454.8L1402.0 461.1L1403.0 454.9L1404.0 464.6L1405.0 443.4L1406.0 448.2L1407.0 435.4L1408.0 442.1L1409.0 434.0L1410.0 423.1L1411.0 430.6L1412.0 403.6L1413.0 427.0L1414.0 450.5L1415.0 434.0L1416.0 431.3L1417.0 440.8L1418.0 430.8L1419.0 432.9L1420.0 420.9L1421.0 443.1L1422.0 455.7L1423.0 447.9L1424.0 471.0L1425.0 471.8L1426.0 457.7L1427.0 449.7L1428.0 452.4L1429.0 423.3L1430.0 458.7L1431.0 460.6L1432.0 410.7L1433.0 465.6L1434.0 429.6L1435.0 443.2L1436.0 471.6L1437.0 426.0L1438.0 446.5L1439.0 435.4L1440.0 437.7L1441.0 435.8L1442.0 411.1L1443.0 406.8L1444.0 436.7L1445.0 443.9L1446.0 426.6L1447.0 433.4L1448.0 471.4L1449.0 433.6L1450.0 446.9L1451.0 444.7L1452.0 463.9L1453.0 411.3L1454.0 433.6L1455.0 417.3L1456.0 448.3L1457.0 444.8L1458.0 443.7L1459.0 429.9L1460.0 436.3L1461.0 450.4L1462.0 421.3L1463.0 433.4L1464.0 458.0L1465.0 449.5L1466.0 428.5L1467.0 443.3L1468.0 421.4L1469.0 461.0L1470.0 450.5L1471.0 456.1L1472.0 457.0L1473.0 422.3L1474.0 428.0L1475.0 442.6L1476.0 445.9L1477.0 417.4L1478.0 420.1L1479.0 474.1L1480.0 445.7L1481.0 474.4L1482.0 468.1L1483.0 455.3L1484.0 462.8L1485.0 437.5L1486.0 452.7L1487.0 450.4L1488.0 448.5L1489.0 422.7L1490.0 443.6L1491.0 435.3L1492.0 421.8L1495 514" fill="none" stroke="#e24d42" stroke-width="1.1" stroke-linejoin="round"/>
<path d="M70.0 513.8L71.0 513.8L72.1 513.8L73.1 513.8L74.2 513.8L75.2 513.8L76.3 513.8L77.3 513.8L78.4 513.8L79.4 513.8L80.5 513.8L81.5 513.8L82.6 513.8L83.6 513.8L84.7 513.8L85.7 513.8L86.8 513.8L87.8 513.8L88.9 513.8L89.9 513.8L91.0 513.8L92.0 513.8L93.1 513.8L94.1 513.8L95.2 513.8L96.2 513.8L97.3 513.8L98.3 513.8L99.4 513.8L100.4 513.7L101.5 513.8L102.5 513.8L103.6 513.8L104.6 513.8L105.7 513.8L106.7 513.8L107.8 513.8L108.8 513.8L109.9 513.7L110.9 513.8L112.0 513.8L113.0 513.8L114.1 513.8L115.1 513.8L116.2 513.7L117.2 513.7L118.3 513.8L119.3 513.8L120.4 513.8L121.4 513.8L122.5 513.8L123.5 513.8L124.6 513.8L125.6 513.8L126.7 513.8L127.7 513.8L128.8 513.8L129.8 513.8L130.9 513.8L131.9 513.8L133.0 513.8L134.0 513.8L135.1 513.8L136.1 513.8L137.2 513.8L138.2 513.8L139.3 513.8L140.3 513.8L141.4 513.8L142.4 513.8L143.5 513.8L144.5 513.8L145.6 513.8L146.6 513.8L147.7 513.8L148.7 513.7L149.8 513.8L150.8 513.8L151.9 513.8L152.9 513.8L154.0 513.8L155.0 513.7L156.1 513.8L157.1 513.8L158.2 513.7L159.2 513.8L160.3 513.8L161.3 513.8L162.4 513.7L163.4 513.7L164.5 513.7L165.5 513.8L166.6 513.8L167.6 513.7L168.7 513.7L169.7 513.7L170.8 513.8L171.8 513.7L172.9 513.7L173.9 513.7L175.0 513.8L176.0 513.7L177.1 513.7L178.1 513.7L179.2 513.7L180.2 513.8L181.3 513.7L182.3 513.7L183.4 513.7L184.4 513.8L185.5 513.7L186.5 513.7L187.6 513.7L188.6 513.7L189.7 513.7L190.7 513.8L191.8 513.7L192.8 513.7L193.9 513.7L194.9 513.7L196.0 513.7L197.0 513.7L198.1 513.7L199.1 513.7L200.2 513.7L201.2 513.7L202.3 513.7L203.3 513.7L204.4 513.7L205.4 513.7L206.5 513.6L207.5 513.7L208.6 513.7L209.6 513.7L210.7 513.7L211.7 513.7L212.8 513.7L213.8 513.7L214.9 513.7L215.9 513.7L217.0 513.7L218.0 513.7L219.1 513.7L220.1 513.7L221.2 513.7L222.2 513.7L223.3 513.7L224.3 513.7L225.4 513.7L226.4 513.7L227.5 513.6L228.5 513.7L229.6 513.7L230.6 513.7L231.7 513.7L232.7 513.6L233.8 513.6L234.8 513.6L235.9 513.6L236.9 513.7L238.0 513.6L239.0 513.6L240.1 513.6L241.1 513.6L242.2 513.6L243.2 513.6L244.3 513.6L245.3 513.6L246.4 513.6L247.4 513.5L248.5 513.5L249.5 513.5L250.6 513.5L251.6 513.5L252.7 513.5L253.7 513.5L254.8 513.5L255.8 513.5L256.9 513.5L257.9 513.4L259.0 513.4L260.0 513.4L261.1 513.5L262.1 513.3L263.2 513.4L264.2 513.4L265.3 513.4L266.3 513.4L267.4 513.3L268.4 513.4L269.5 513.4L270.5 513.4L271.6 513.2L272.6 513.3L273.7 513.4L274.7 513.3L275.8 513.4L276.8 513.1L277.9 513.4L278.9 513.2L280.0 513.0L281.0 513.4L282.1 513.2L283.1 513.1L284.2 513.2L285.2 513.2L286.3 513.1L287.3 513.2L288.4 513.1L289.4 513.2L290.5 512.8L291.5 513.2L292.6 513.0L293.6 513.2L294.7 513.2L295.7 513.1L296.8 512.9L297.8 513.0L298.9 513.1L299.9 513.0L301.0 513.1L302.0 513.0L303.1 513.0L304.1 513.2L305.2 513.0L306.2 513.1L307.3 513.0L308.3 513.1L309.4 513.1L310.4 513.0L311.5 512.8L312.5 512.6L313.6 512.9L314.6 512.7L315.7 512.9L316.7 513.1L317.8 512.8L318.8 512.7L319.9 512.8L320.9 512.7L322.0 512.6L323.0 512.9L324.1 513.0L325.1 512.7L326.2 512.7L327.2 512.7L328.3 512.4L329.3 512.3L330.4 512.7L331.4 512.4L332.5 512.4L333.5 512.4L334.6 512.3L335.6 512.6L336.7 512.3L337.7 512.0L338.8 511.9L339.8 512.6L340.9 512.3L341.9 512.1L343.0 512.3L344.0 512.5L345.1 511.9L346.1 512.6L347.2 512.1L348.2 512.2L349.3 512.6L350.3 511.8L351.4 512.0L352.4 512.4L353.5 511.1L354.5 511.2L355.6 511.7L356.6 510.5L357.7 509.3L358.7 508.4L359.8 508.4L360.8 508.0L361.9 507.0L362.9 507.4L364.0 504.8L365.0 505.9L366.1 505.1L367.1 503.9L368.2 505.9L369.2 503.9L370.3 495.8L371.3 497.8L372.4 498.5L373.4 494.4L374.5 496.6L375.5 491.7L376.6 495.5L377.6 489.3L378.7 499.2L379.7 480.3L380.8 491.0L381.8 497.6L382.9 487.0L383.9 487.2L385.0 481.9L386.0 492.0L387.1 477.4L388.1 468.0L389.2 491.5L390.2 474.2L391.3 479.9L392.3 461.9L393.4 460.3L394.4 487.2L395.5 466.1L396.5 471.3L397.6 454.1L398.6 478.6L399.7 464.7L400.7 423.1L401.8 478.5L402.8 480.5L403.9 467.4L404.9 467.5L406.0 454.1L407.0 464.8L408.1 478.2L409.1 463.5L410.2 438.8L411.2 447.4L412.3 495.4L413.3 468.7L414.4 479.8L415.4 457.1L416.5 469.1L417.5 437.1L418.6 452.3L419.6 452.8L420.7 463.5L421.7 467.0L422.8 461.2L423.8 446.7L424.9 458.3L425.9 471.7L427.0 447.0L428.0 463.5L429.1 467.6L430.1 478.4L431.2 434.8L432.2 476.1L433.3 495.3L434.3 451.0L435.4 457.8L436.4 469.7L437.5 450.5L438.5 459.8L439.6 460.8L440.6 433.7L441.7 470.0L442.7 458.4L443.8 442.0L444.8 438.5L445.9 444.8L446.9 484.0L448.0 495.2L449.0 457.8L450.1 466.0L451.1 451.9L452.2 468.4L453.2 463.1L454.3 489.2L455.3 432.0L456.4 473.2L457.4 461.2L458.5 459.5L459.5 468.2L460.6 461.7L461.6 466.7L462.7 445.2L463.7 458.9L464.8 474.7L465.8 475.4L466.9 440.1L467.9 468.0L469.0 451.5L470.0 460.5L471.1 475.0L472.1 477.8L473.2 464.7L474.2 462.6L475.3 457.2L476.3 485.6L477.4 475.5L478.4 467.9L479.5 442.4L480.5 495.2L481.6 459.9L482.6 474.7L483.7 460.0L484.7 473.9L485.8 461.0L486.8 442.9L487.9 461.2L488.9 460.0L490.0 460.9L491.0 477.8L492.1 458.4L493.1 469.7L494.2 478.8L495.2 467.1L496.3 470.0L497.3 455.2L498.4 467.2L499.4 474.5L500.5 444.6L501.5 451.7L502.6 447.5L503.6 457.4L504.7 468.2L505.7 472.9L506.8 470.8L507.8 452.3L508.9 446.2L509.9 488.9L511.0 467.2L512.0 487.9L513.1 464.1L514.1 484.7L515.2 485.6L516.2 464.8L517.3 467.8L518.3 491.5L519.4 455.4L520.4 434.1L521.5 488.8L522.5 439.3L523.6 476.9L524.6 474.0L525.7 469.3L526.7 488.3L527.8 447.1L528.8 459.2L529.9 477.9L530.9 470.8L532.0 489.3L533.0 471.8L534.1 452.6L535.1 492.3L536.2 473.2L537.2 464.4L538.3 450.9L539.3 446.4L540.4 473.5L541.4 477.7L542.5 459.9L543.5 472.1L544.6 471.3L545.6 450.5L546.7 441.4L547.7 462.7L548.8 469.5L549.8 458.1L550.9 494.9L551.9 466.9L553.0 482.5L554.0 431.0L555.1 455.9L556.1 464.6L557.2 469.6L558.2 495.0L559.3 456.0L560.3 442.4L561.4 477.6L562.4 456.5L563.5 442.3L564.5 489.8L565.6 452.7L566.6 446.5L567.7 463.3L568.7 467.6L569.8 455.0L570.8 489.7L571.9 465.3L572.9 451.0L574.0 485.2L575.0 451.9L576.1 473.0L577.1 495.0L578.2 468.3L579.2 481.2L580.3 462.0L581.3 484.2L582.4 451.1L583.4 477.7L584.5 461.4L585.5 475.6L586.6 471.5L587.6 449.0L588.7 463.6L589.7 472.6L590.8 485.4L591.8 449.5L592.9 455.9L593.9 471.6L595.0 463.2L596.0 482.1L597.1 481.8L598.1 479.0L599.2 461.5L600.2 462.4L601.3 477.8L602.3 455.8L603.4 455.1L604.4 464.2L605.5 451.4L606.5 471.1L607.6 468.5L608.6 459.8L609.7 467.3L610.7 455.0L611.8 485.4L612.8 445.7L613.9 478.4L614.9 469.2L616.0 487.2L617.0 457.9L618.1 448.0L619.1 451.0L620.2 454.5L621.2 489.9L622.3 478.4L623.3 449.2L624.4 480.7L625.4 450.2L626.5 464.1L627.5 467.2L628.6 459.6L629.6 480.9L630.7 480.3L631.7 479.9L632.8 459.5L633.8 461.8L634.9 458.3L635.9 450.9L637.0 486.9L638.0 475.1L639.1 464.7L640.1 486.8L641.2 474.7L642.2 451.9L643.3 450.6L644.3 451.0L645.4 466.2L646.4 448.1L647.5 451.0L648.5 472.4L649.6 461.9L650.6 447.4L651.7 472.3L652.7 442.4L653.8 467.0L654.8 499.1L655.9 459.8L656.9 464.6L658.0 458.7L659.0 490.5L660.1 479.6L661.1 464.5L662.2 480.6L663.2 486.7L664.3 484.7L665.3 480.4L666.4 469.5L667.4 482.0L668.5 463.5L669.5 442.0L670.6 469.1L671.6 448.2L672.7 462.7L673.7 483.4L674.8 470.7L675.8 481.4L676.9 455.7L677.9 483.9L679.0 447.5L680.0 458.5L681.1 494.8L682.1 455.5L683.2 442.1L684.2 478.6L685.3 452.5L686.3 493.3L687.4 463.3L688.4 491.3L689.5 459.9L690.5 493.2L691.6 494.8L692.6 461.2L693.7 433.5L694.7 475.7L695.8 449.2L696.8 465.4L697.9 471.7L698.9 458.0L700.0 443.0L701.0 485.1L702.1 458.7L703.1 461.9L704.2 487.8L705.2 443.3L706.3 438.4L707.3 480.9L708.4 441.5L709.4 466.1L710.5 469.3L711.5 444.9L712.6 463.6L713.6 462.2L714.7 444.7L715.7 448.0L716.8 453.8L717.8 487.4L718.9 489.9L719.9 450.4L721.0 480.4L722.0 464.7L723.1 482.6L724.1 469.5L725.2 485.6L726.2 443.0L727.3 481.8L728.3 439.0L729.4 469.6L730.4 449.1L731.5 487.6L732.5 467.3L733.6 469.9L734.6 459.0L735.7 438.3L736.7 473.6L737.8 463.3L738.8 439.4L739.9 440.8L740.9 468.3L742.0 476.4L743.0 467.1L744.1 461.4L745.1 433.5L746.2 473.9L747.2 462.2L748.3 445.3L749.3 494.6L750.4 492.3L751.4 484.1L752.5 468.4L753.5 430.9L754.6 460.9L755.6 447.1L756.7 469.9L757.7 494.5L758.8 494.5L759.8 451.7L760.9 463.9L761.9 485.7L763.0 450.2L764.0 489.2L765.1 450.0L766.1 445.3L767.2 477.8L768.2 482.8L769.3 454.2L770.3 482.6L771.4 453.9L772.4 484.1L773.5 454.7L774.5 465.2L775.6 472.9L776.6 479.7L777.7 463.0L778.7 494.3L779.8 470.6L780.8 472.3L781.9 456.5L782.9 484.9L784.0 441.3L785.0 471.1L786.1 483.2L787.1 446.1L788.2 442.1L789.2 469.2L790.3 479.5L791.3 447.3L792.4 476.6L793.4 471.0L794.5 443.5L795.5 460.7L796.6 464.3L797.6 461.3L798.7 467.3L799.7 504.5L800.8 453.5L801.8 471.8L802.9 464.8L803.9 430.9L805.0 460.2L806.0 469.1L807.1 436.2L808.1 466.2L809.2 482.5L810.2 456.4L811.3 479.6L812.3 473.6L813.4 461.5L814.4 468.2L815.5 477.5L816.5 474.4L817.6 475.0L818.6 449.1L819.7 476.9L820.7 474.7L821.8 436.3L822.8 474.4L823.9 444.4L824.9 446.9L826.0 468.5L827.0 487.1L828.1 459.6L829.1 456.3L830.2 452.0L831.2 465.2L832.3 448.5L833.3 445.8L834.4 481.7L835.4 445.2L836.5 463.6L837.5 474.5L838.6 470.9L839.6 438.5L840.7 451.7L841.7 492.5L842.8 464.9L843.8 468.2L844.9 468.7L845.9 473.7L847.0 487.5L848.0 453.4L849.1 479.9L850.1 471.5L851.2 475.0L852.2 476.8L853.3 455.1L854.3 460.4L855.4 476.0L856.4 480.0L857.5 473.0L858.5 451.8L859.6 464.2L860.6 462.6L861.7 470.9L862.7 469.8L863.8 462.8L864.8 493.1L865.9 442.3L866.9 477.6L868.0 474.4L869.0 446.3L870.1 462.7L871.1 465.3L872.2 474.6L873.2 488.9L874.3 463.2L875.3 448.3L876.4 479.2L877.4 445.9L878.5 482.5L879.5 476.7L880.6 458.5L881.6 465.9L882.7 455.7L883.7 476.8L884.8 481.1L885.8 493.4L886.9 483.6L887.9 481.7L889.0 428.2L890.0 461.3L891.1 475.6L892.1 493.8L893.2 429.2L894.2 478.1L895.3 484.3L896.3 447.5L897.4 448.6L898.4 482.8L899.5 487.5L900.5 480.5L901.6 449.1L902.6 470.4L903.7 423.1L904.7 466.2L905.8 448.0L906.8 486.2L907.9 471.4L908.9 486.1L910.0 433.7L911.0 438.9L912.1 451.7L913.1 467.7L914.2 456.0L915.2 493.7L916.3 428.8L917.3 485.4L918.4 485.2L919.4 476.1L920.5 470.8L921.5 457.2L922.6 455.3L923.6 461.8L924.7 479.6L925.7 455.7L926.8 467.4L927.8 448.2L928.9 479.1L929.9 493.6L931.0 472.6L932.0 433.9L933.1 458.7L934.1 468.5L935.2 452.5L936.2 458.2L937.3 458.8L938.3 473.1L939.4 464.4L940.4 462.6L941.5 475.0L942.5 482.0L943.6 463.5L944.6 451.2L945.7 456.0L946.7 458.2L947.8 458.1L948.8 427.4L949.9 461.7L950.9 450.1L952.0 436.6L953.0 464.7L954.1 461.6L955.1 450.1L956.2 440.5L957.2 460.8L958.3 460.1L959.3 464.1L960.4 483.2L961.4 448.8L962.5 469.0L963.5 490.7L964.6 467.3L965.6 490.7L966.7 479.9L967.7 464.6L968.8 478.5L969.8 448.7L970.9 486.6L971.9 460.6L973.0 456.1L974.0 442.4L975.1 450.4L976.1 460.7L977.2 462.9L978.2 464.9L979.3 446.7L980.3 473.8L981.4 455.9L982.4 465.1L983.5 460.0L984.5 467.6L985.6 430.9L986.6 473.5L987.7 459.5L988.7 459.0L989.8 453.9L990.8 456.2L991.9 456.5L992.9 430.9L994.0 486.1L995.0 462.7L996.1 481.8L997.1 459.1L998.2 480.9L999.2 477.4L1000.3 463.4L1001.3 440.6L1002.4 453.3L1003.4 457.6L1004.5 440.2L1005.5 476.9L1006.6 492.0L1007.6 468.6L1008.7 466.2L1009.7 442.3L1010.8 428.0L1011.8 482.6L1012.9 422.4L1013.9 436.7L1015.0 448.1L1016.0 408.2L1017.1 422.7L1018.1 459.9L1019.2 468.6L1020.2 458.8L1021.3 482.8L1022.3 453.3L1023.4 462.6L1024.4 455.4L1025.5 454.9L1026.5 477.6L1027.6 439.3L1028.6 476.8L1029.7 446.0L1030.7 486.0L1031.8 454.2L1032.8 473.4L1033.9 459.4L1034.9 470.6L1036.0 491.0L1037.0 478.0L1038.1 458.6L1039.1 449.5L1040.2 483.6L1041.2 490.9L1042.3 473.7L1043.3 462.8L1044.4 469.7L1045.4 472.5L1046.5 445.2L1047.5 443.2L1048.6 446.8L1049.6 474.4L1050.7 457.6L1051.7 423.2L1052.8 482.3L1053.8 443.8L1054.9 456.9L1055.9 466.4L1057.0 434.4L1058.0 445.2L1059.1 443.5L1060.1 437.5L1061.2 445.5L1062.2 478.9L1063.3 464.0L1064.3 440.3L1065.4 470.3L1066.4 456.4L1067.5 450.2L1068.5 432.2L1069.6 434.4L1070.6 441.2L1071.7 459.7L1072.7 440.6L1073.8 447.1L1074.8 458.9L1075.9 432.5L1076.9 447.3L1078.0 469.0L1079.0 433.6L1080.1 460.0L1081.1 445.1L1082.2 482.1L1083.2 455.6L1084.3 471.8L1085.3 472.2L1086.4 488.7L1087.4 416.8L1088.5 457.3L1089.5 450.3L1090.6 434.7L1091.6 456.5L1092.7 445.0L1093.7 478.5L1094.8 450.4L1095.8 461.3L1096.9 444.7L1097.9 450.4L1099.0 478.6L1100.0 487.0L1101.1 471.7L1102.1 439.7L1103.2 445.3L1104.2 445.5L1105.3 487.9L1106.3 487.9L1107.4 464.2L1108.4 458.7L1109.5 463.6L1110.5 445.6L1111.6 455.4L1112.6 474.3L1113.7 468.5L1114.7 449.1L1115.8 450.3L1116.8 453.0L1117.9 408.3L1118.9 456.4L1120.0 449.0L1121.0 470.2L1122.1 457.8L1123.1 440.5L1124.2 439.4L1125.2 453.3L1126.3 442.3L1127.3 448.8L1128.4 487.0L1129.4 487.3L1130.5 403.0L1131.5 432.4L1132.6 450.0L1133.6 483.9L1134.7 474.4L1135.7 420.5L1136.8 487.0L1137.8 454.5L1138.9 429.7L1139.9 444.5L1141.0 431.5L1142.0 449.8L1143.1 396.5L1144.1 468.3L1145.2 475.3L1146.2 440.3L1147.3 415.4L1148.3 447.0L1149.4 423.0L1150.4 456.9L1151.5 470.9L1152.5 414.4L1153.6 410.4L1154.6 410.9L1155.7 454.0L1156.7 469.7L1157.8 469.9L1158.8 448.7L1159.9 430.5L1160.9 431.2L1162.0 474.9L1163.0 436.6L1164.1 439.9L1165.1 437.3L1166.2 439.2L1167.2 442.7L1168.3 422.4L1169.3 433.0L1170.4 429.7L1171.4 452.2L1172.5 423.5L1173.5 436.1L1174.6 482.3L1175.6 418.3L1176.7 437.6L1177.7 404.3L1178.8 433.2L1179.8 430.6L1180.9 421.5L1181.9 427.3L1183.0 439.2L1184.0 477.3L1185.1 372.5L1186.1 470.8L1187.2 434.6L1188.2 405.0L1189.3 412.5L1190.3 406.4L1191.4 399.8L1192.4 333.6L1193.5 412.9L1194.5 333.0L1195.6 451.9L1196.6 413.4L1197.7 431.1L1198.7 436.5L1199.8 410.0L1200.8 372.6L1201.9 440.6L1202.9 440.3L1204.0 393.9L1205.0 399.2L1206.1 352.7L1207.1 382.2L1208.2 407.8L1209.2 425.7L1210.3 407.2L1211.3 419.8L1212.4 459.3L1213.4 412.7L1214.5 418.5L1215.5 420.0L1216.6 426.3L1217.6 352.8L1218.7 386.5L1219.7 377.5L1220.8 431.0L1221.8 445.3L1222.9 344.5L1223.9 399.6L1225.0 420.2L1226.0 414.2L1227.1 297.3L1228.1 395.6L1229.2 442.0L1230.2 421.3L1231.3 429.4L1232.3 397.9L1233.4 447.7L1234.4 410.4L1235.5 377.1L1236.5 401.6L1237.6 437.1L1238.6 425.4L1239.7 396.5L1240.7 382.2L1241.8 367.8L1242.8 405.6L1243.9 451.2L1244.9 342.7L1246.0 386.7L1247.0 381.9L1248.1 385.4L1249.1 438.9L1250.2 409.6L1251.2 385.7L1252.3 286.2L1253.3 392.8L1254.4 473.2L1255.4 404.4L1256.5 379.2L1257.5 339.2L1258.6 363.0L1259.6 287.2L1260.7 331.5L1261.7 334.0L1262.8 350.7L1263.8 450.2L1264.9 353.5L1265.9 363.6L1267.0 412.2L1268.0 363.0L1269.1 369.8L1270.1 408.4L1271.2 392.8L1272.2 398.7L1273.3 376.1L1274.3 405.1L1275.4 360.8L1276.4 471.5L1277.5 397.4L1278.5 461.5L1279.6 405.9L1280.6 359.2L1281.7 381.7L1282.7 387.4L1283.8 378.5L1284.8 307.3L1285.9 433.2L1286.9 338.1L1288.0 295.2L1289.0 401.9L1290.1 371.1L1291.1 419.7L1292.2 368.1L1293.2 342.0L1294.3 435.7L1295.3 380.4L1296.4 394.8L1297.4 470.1L1298.5 384.6L1299.5 414.7L1300.6 307.0L1301.6 418.2L1302.7 287.7L1303.7 400.3L1304.8 274.4L1305.8 345.1L1306.9 349.0L1307.9 330.5L1309.0 325.1L1310.0 298.8L1311.1 281.2L1312.1 388.4L1313.2 435.1L1314.2 468.8L1315.3 389.6L1316.3 329.1L1317.4 348.8L1318.4 362.2L1319.5 386.5L1320.5 401.5L1321.6 382.3L1322.6 346.1L1323.7 460.9L1324.7 327.1L1325.8 444.2L1326.8 374.0L1327.9 399.4L1328.9 384.8L1330.0 421.3L1331.0 427.0L1332.1 376.4L1333.1 422.9L1334.2 228.1L1335.2 385.8L1336.3 398.8L1337.3 392.6L1338.4 421.3L1339.4 466.9L1340.5 375.5L1341.5 343.5L1342.6 444.8L1343.6 359.8L1344.7 428.0L1345.7 361.5L1346.8 338.7L1347.8 331.2L1348.9 333.6L1349.9 398.3L1351.0 307.3L1352.0 383.1L1353.1 336.9L1354.1 231.9L1355.2 373.9L1356.2 430.5L1357.3 319.9L1358.3 420.4L1359.4 194.4L1360.4 419.1L1361.5 304.5L1362.5 363.2L1363.6 465.0L1364.6 308.9L1365.7 228.6L1366.7 243.9L1367.8 385.2L1368.8 345.9L1369.9 319.4L1370.9 295.5L1372.0 347.0L1373.0 415.4L1374.1 302.0L1375.1 309.9L1376.2 429.2L1377.2 369.4L1378.3 329.6L1379.3 345.9L1380.4 218.5L1381.4 295.0L1382.5 310.3L1383.5 351.1L1384.6 428.6L1385.6 303.8L1386.7 253.3L1387.7 215.9L1388.8 343.6L1389.8 343.2L1390.9 247.3L1391.9 247.0L1393.0 317.4L1394.0 292.7L1395.1 388.2L1396.1 299.9L1397.2 391.8L1398.2 346.7L1399.3 344.8L1400.3 367.2L1401.4 461.0L1402.4 390.2L1403.5 312.4L1404.5 338.3L1405.6 360.2L1406.6 304.3L1407.7 286.1L1408.7 274.7L1409.8 386.7L1410.8 329.9L1411.9 353.7L1412.9 390.7L1414.0 433.0L1415.0 336.2L1416.1 389.4L1417.1 194.4L1418.2 334.9L1419.2 343.2L1420.3 355.0L1421.3 195.4L1422.4 392.9L1423.4 338.0L1424.5 380.6L1425.5 335.1L1426.6 328.7L1427.6 248.4L1428.7 426.0L1429.7 327.1L1430.8 210.9L1431.8 361.5L1432.9 337.8L1433.9 388.1L1435.0 458.9L1436.0 332.1L1437.1 194.4L1438.1 357.8L1439.2 456.3L1440.2 305.0L1441.3 318.2L1442.3 251.9L1443.4 258.1L1444.4 342.8L1445.5 294.4L1446.5 452.8L1447.6 242.5L1448.6 309.3L1449.7 244.0L1450.7 245.4L1451.8 343.1L1452.8 332.9L1453.9 385.5L1454.9 458.8L1456.0 331.2L1457.0 194.4L1458.1 400.6L1459.1 269.1L1460.2 313.7L1461.2 287.5L1462.3 377.1L1463.3 450.0L1464.4 263.1L1465.4 275.2L1466.5 328.1L1467.5 350.9L1468.6 340.1L1469.6 329.6L1470.7 357.0L1471.7 458.7L1472.8 260.8L1473.8 429.8L1474.9 343.4L1475.9 341.3L1477.0 298.9L1478.0 464.3L1479.1 227.8L1480.1 268.9L1481.2 261.4L1482.2 225.5L1483.3 379.2L1484.3 459.8L1485.4 297.4L1486.4 226.7L1487.5 238.8L1488.5 362.8L1489.6 331.4L1490.6 305.0L1491.7 455.6L1492.7 374.2L1495 514" fill="none" stroke="#1f78c1" stroke-width="1.15" stroke-linejoin="round"/>
<path d="M157.9 136.5V514" stroke="#4a7ddf" stroke-opacity="0.85" stroke-width="1.1" stroke-dasharray="2.4 2.3"/><path d="M157.9 515.5L162.4 520.5H153.4Z" fill="#3d71d9"/><path d="M216.1 136.5V514" stroke="#4a7ddf" stroke-opacity="0.85" stroke-width="1.1" stroke-dasharray="2.4 2.3"/><path d="M216.1 515.5L220.6 520.5H211.6Z" fill="#3d71d9"/><path d="M288.8 136.5V514" stroke="#4a7ddf" stroke-opacity="0.85" stroke-width="1.1" stroke-dasharray="2.4 2.3"/><path d="M288.8 515.5L293.3 520.5H284.3Z" fill="#3d71d9"/><path d="M303.2 136.5V514" stroke="#4a7ddf" stroke-opacity="0.85" stroke-width="1.1" stroke-dasharray="2.4 2.3"/><path d="M303.2 515.5L307.7 520.5H298.7Z" fill="#3d71d9"/><path d="M1483.8 136.5V514" stroke="#4a7ddf" stroke-opacity="0.85" stroke-width="1.1" stroke-dasharray="2.4 2.3"/><path d="M1483.8 515.5L1488.3 520.5H1479.3Z" fill="#3d71d9"/>
<path d="M70 514.2H1516" stroke="#7eb26d" stroke-width="1.3"/>
</svg>
<svg class="abs" style="left:90.7px;top:64.8px" width="8" height="6" viewBox="0 0 8 6"><path d="M1.5 1.5L4.00 4.50L6.50 1.5" fill="none" stroke="#5a5e62" stroke-width="1.20" stroke-linecap="round" stroke-linejoin="round"/></svg>
<svg class="abs" style="left:272.3px;top:64.4px" width="8" height="6" viewBox="0 0 8 6"><path d="M1.5 1.5L4.00 4.50L6.50 1.5" fill="none" stroke="#5a5e62" stroke-width="1.20" stroke-linecap="round" stroke-linejoin="round"/></svg>
<svg class="abs" style="left:407.3px;top:64.4px" width="8" height="6" viewBox="0 0 8 6"><path d="M1.5 1.5L4.00 4.50L6.50 1.5" fill="none" stroke="#5a5e62" stroke-width="1.20" stroke-linecap="round" stroke-linejoin="round"/></svg>
<svg class="abs" style="left:536.8px;top:64.4px" width="8" height="6" viewBox="0 0 8 6"><path d="M1.5 1.5L4.00 4.50L6.50 1.5" fill="none" stroke="#5a5e62" stroke-width="1.20" stroke-linecap="round" stroke-linejoin="round"/></svg>
<svg class="abs" style="left:669.0px;top:64.4px" width="8" height="6" viewBox="0 0 8 6"><path d="M1.5 1.5L4.00 4.50L6.50 1.5" fill="none" stroke="#5a5e62" stroke-width="1.20" stroke-linecap="round" stroke-linejoin="round"/></svg>
<svg class="abs" style="left:804.0px;top:104.0px" width="8" height="6" viewBox="0 0 8 6"><path d="M1.5 1.5L4.00 4.50L6.50 1.5" fill="none" stroke="#6a6e72" stroke-width="1.20" stroke-linecap="round" stroke-linejoin="round"/></svg>
<svg class="abs" style="left:1362.2px;top:19.5px" width="8" height="6" viewBox="0 0 8 6"><path d="M1.5 1.5L4.25 4.70L7.00 1.5" fill="none" stroke="#464c54" stroke-width="1.30" stroke-linecap="round" stroke-linejoin="round"/></svg>
<svg class="abs" style="left:1493.5px;top:19.4px" width="8" height="6" viewBox="0 0 8 6"><path d="M1.5 1.5L4.25 4.70L7.00 1.5" fill="none" stroke="#464c54" stroke-width="1.30" stroke-linecap="round" stroke-linejoin="round"/></svg>
<!-- legend -->
<div class="abs" style="left:13px;top:564px;width:1540px;height:232px;overflow:hidden">
<div class="abs" style="left:1381.4px;top:-5.5px;font-size:11px;font-weight:bold;color:#1f62e0">max</div>
<div class="abs" style="left:1455.2px;top:-5.5px;font-size:11px;font-weight:bold;color:#1f62e0">avg</div>
<div class="abs" style="left:1483px;top:-5.5px;font-size:11px;font-weight:bold;color:#1f62e0">current</div>
</div>
<svg class="abs" style="left:1420px;top:564px" width="8" height="5" viewBox="0 0 8 5"><path d="M1 0.5L4 3.5L7 0.5" fill="none" stroke="#1f62e0" stroke-width="1.4"/></svg>
<div class="lrow" style="top:574.25px"><div class="sw" style="background:#1f78c1"></div><div class="nm">WaitDuration</div><div class="c1">1020247</div><div class="c2">182207</div><div class="c3">815</div></div>
<div class="lrow s" style="top:598.74px"><div class="sw" style="background:#e24d42"></div><div class="nm">WaitCount</div><div class="c1">389839</div><div class="c2">70750</div><div class="c3">67.1</div></div>
<div class="lrow" style="top:623.23px"><div class="sw" style="background:#7eb26d"></div><div class="nm">MaxOpenConnections</div><div class="c1">132</div><div class="c2">40.4</div><div class="c3">36</div></div>
<div class="lrow s" style="top:647.72px"><div class="sw" style="background:#eab839"></div><div class="nm">OpenConnections</div><div class="c1">97.5</div><div class="c2">38.5</div><div class="c3">36</div></div>
<div class="lrow" style="top:672.21px"><div class="sw" style="background:#ef843c"></div><div class="nm">Idle</div><div class="c1">97</div><div class="c2">33.7</div><div class="c3">33.5</div></div>
<div class="lrow s" style="top:696.70px"><div class="sw" style="background:#6ed0e0"></div><div class="nm">InUse</div><div class="c1">15.5</div><div class="c2">4.89</div><div class="c3">2.50</div></div>
<div class="lrow" style="top:721.19px"><div class="sw" style="background:#508642"></div><div class="nm">MaxLifetimeClosed</div><div class="c1">4.13</div><div class="c2">1.37</div><div class="c3">0.350</div></div>
<div class="lrow s" style="top:745.68px"><div class="sw" style="background:#705da0"></div><div class="nm">MaxIdleTimeClosed</div><div class="c1">0.650</div><div class="c2">0.0165</div><div class="c3">0</div></div>
<div class="lrow" style="top:770.17px"><div class="sw" style="background:#ba43a9"></div><div class="nm">MaxIdleClosed</div><div class="c1">0</div><div class="c2">0</div><div class="c3">0</div></div>

<!-- tooltip -->
<div class="tt">
<div class="abs" style="left:0;top:8px;width:198px;text-align:center;font-size:11.5px;font-weight:bold;color:#24292e">2023-07-11 22:50:00</div>
<div class="tr" style="top:28.0px"><div class="d" style="background:#7eb26d"></div><div class="n">MaxOpenConnections:</div><div class="v">36</div></div>
<div class="tr" style="top:44.9px"><div class="d" style="background:#eab839"></div><div class="n">OpenConnections:</div><div class="v">36</div></div>
<div class="tr" style="top:61.8px"><div class="d" style="background:#6ed0e0"></div><div class="n">InUse:</div><div class="v">10</div></div>
<div class="tr" style="top:78.7px"><div class="d" style="background:#ef843c"></div><div class="n">Idle:</div><div class="v">26</div></div>
<div class="tr" style="top:95.6px"><div class="d" style="background:#e24d42"></div><div class="n">WaitCount:</div><div class="v">21477</div></div>
<div class="tr" style="top:112.5px"><div class="d" style="background:#1f78c1"></div><div class="n" style="font-weight:bold">WaitDuration:</div><div class="v">86787</div></div>
<div class="tr" style="top:129.4px"><div class="d" style="background:#ba43a9"></div><div class="n">MaxIdleClosed:</div><div class="v">0</div></div>
<div class="tr" style="top:146.3px"><div class="d" style="background:#705da0"></div><div class="n">MaxIdleTimeClosed:</div><div class="v">0</div></div>
<div class="tr" style="top:163.2px"><div class="d" style="background:#508642"></div><div class="n">MaxLifetimeClosed:</div><div class="v">0.650</div></div>

</div>
</div></body></html>
